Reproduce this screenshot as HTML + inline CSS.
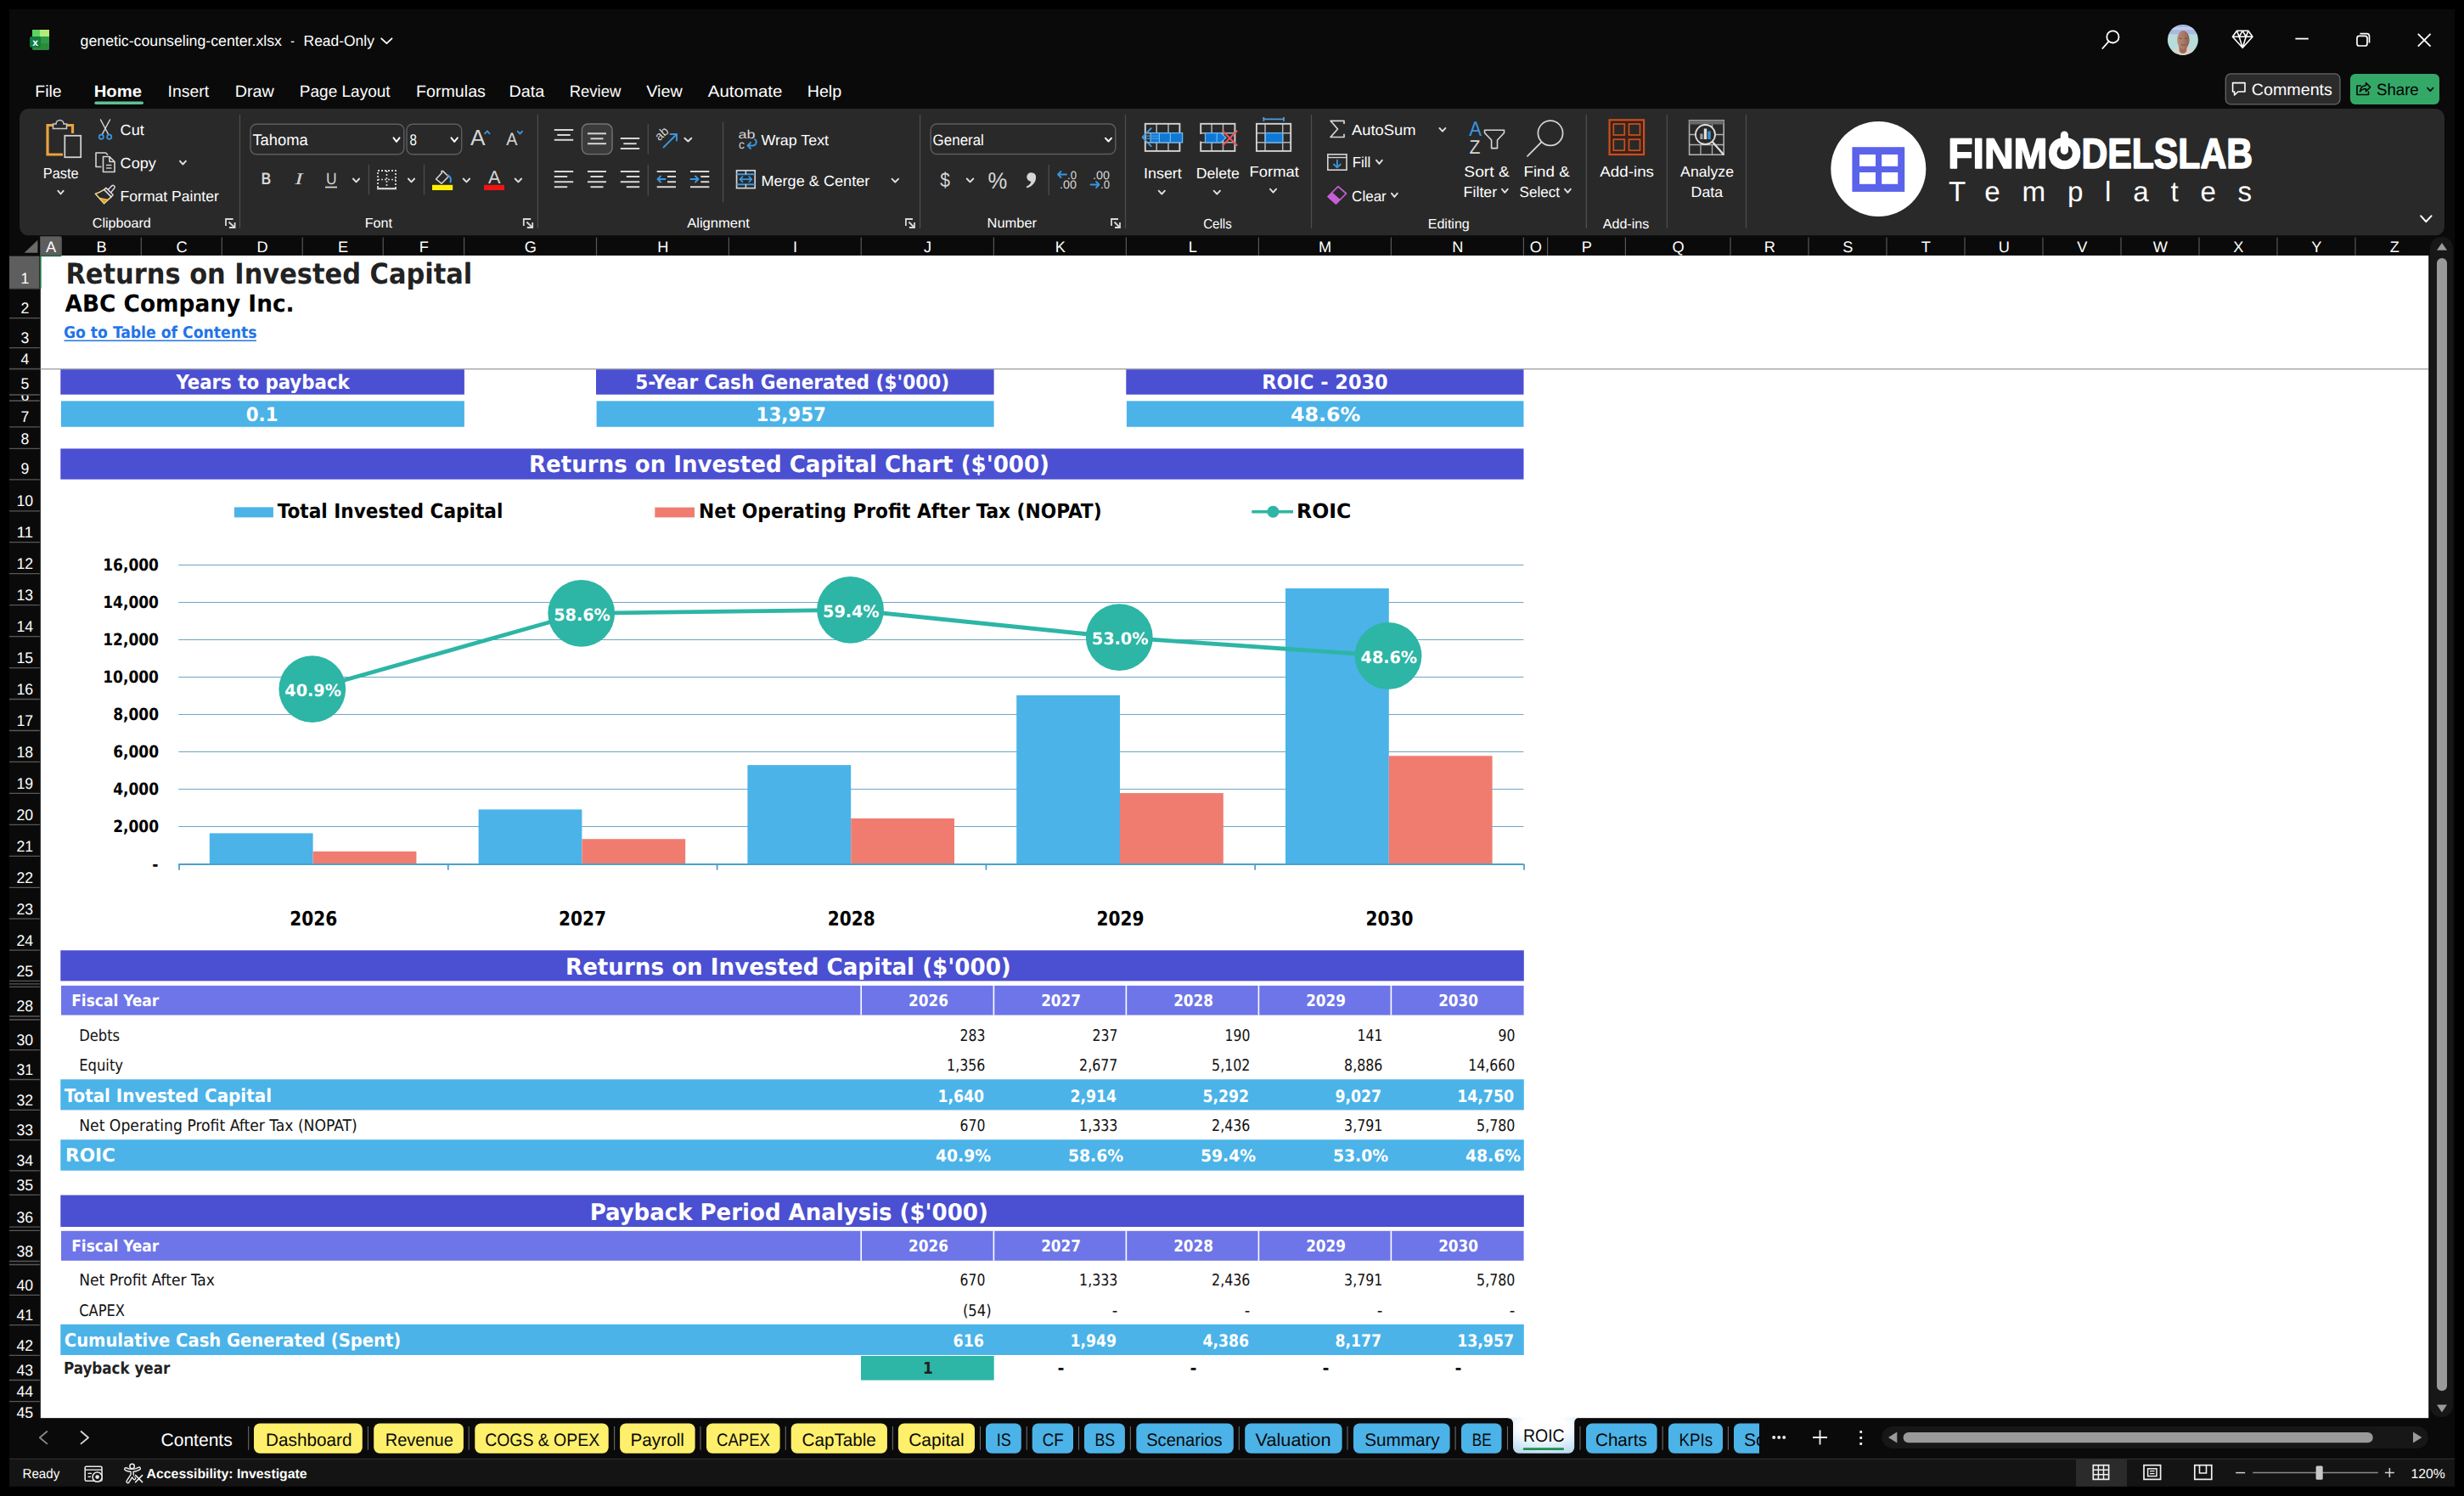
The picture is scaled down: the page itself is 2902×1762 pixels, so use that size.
<!DOCTYPE html>
<html lang="en"><head><meta charset="utf-8"><title>genetic-counseling-center.xlsx - Read-Only - Excel</title>
<style>
html,body{margin:0;padding:0;background:#000;overflow:hidden}
#app{position:relative;width:2902px;height:1762px;overflow:hidden;background:#000}
svg{display:block;position:absolute;left:0;top:0}
text{white-space:pre}
</style></head><body>
<div id="app">
<svg width="2902" height="1762" viewBox="0 0 2902 1762" text-rendering="geometricPrecision">
<rect x="0.0" y="0.0" width="2902.0" height="1762.0" fill="#000" />
<rect x="11.0" y="11.0" width="2880.0" height="1740.0" fill="#0a0a0a" />
<g>
<rect x="38.0" y="35.0" width="20.0" height="24.0" fill="#21a366" rx="2.5" />
<rect x="38.0" y="35.0" width="9.0" height="8.0" fill="#5ed363" />
<rect x="47.0" y="35.0" width="11.0" height="8.0" fill="#b3eb78" />
<path d="M38 43H58V56.5a2.5 2.5 0 0 1-2.5 2.5H40.5a2.5 2.5 0 0 1-2.5-2.5Z" fill="#2a8a3a"/>
<rect x="38.0" y="43.0" width="9.0" height="8.0" fill="#1f7a3c" />
<rect x="47.0" y="43.0" width="11.0" height="8.0" fill="#2f9a44" />
<rect x="35.0" y="43.0" width="13.0" height="13.0" fill="#107c41" rx="2" />
<text x="41.5" y="54" font-family="Liberation Sans, sans-serif" font-weight="bold" font-size="12" fill="#fff" text-anchor="middle">x</text>
</g>
<text x="94.6" y="53.5" font-family="Liberation Sans, sans-serif" font-size="17.6" font-weight="normal" fill="#fff" textLength="237.3" lengthAdjust="spacingAndGlyphs">genetic-counseling-center.xlsx</text>
<text x="342.2" y="53.5" font-family="Liberation Sans, sans-serif" font-size="17.6" font-weight="normal" fill="#fff" textLength="4.6" lengthAdjust="spacingAndGlyphs">-</text>
<text x="357.6" y="53.5" font-family="Liberation Sans, sans-serif" font-size="17.6" font-weight="normal" fill="#fff" textLength="83.3" lengthAdjust="spacingAndGlyphs">Read-Only</text>
<path d="M449.2 45.3 L455.4 51.2 L461.5 45.3" stroke="#fff" stroke-width="1.8" fill="none" stroke-linecap="round" stroke-linejoin="round"/>
<circle cx="2488.4" cy="43.4" r="7.1" fill="none" stroke="#fff" stroke-width="1.8"/>
<line x1="2483.5" y1="48.8" x2="2476.3" y2="57.0" stroke="#fff" stroke-width="1.8" stroke-linecap="round"/>
<defs><linearGradient id="fg" x1="0" y1="0" x2="1" y2="0"><stop offset="0" stop-color="#b88a76"/><stop offset="0.55" stop-color="#a67865"/><stop offset="1" stop-color="#8a5f50"/></linearGradient></defs>
<clipPath id="av"><circle cx="2570.9" cy="46.9" r="18"/></clipPath>
<g clip-path="url(#av)">
<rect x="2552.0" y="28.0" width="38.0" height="13.0" fill="#aab9e2" />
<rect x="2552.0" y="32.0" width="38.0" height="3.0" fill="#c2cdea" />
<rect x="2552.0" y="40.4" width="38.0" height="25.6" fill="#b8dcdb" />
<path d="M2556 66 C2558 58 2564 56.5 2567 56 L2575.5 56 C2579 56.5 2584 58 2586 66 Z" fill="#d9d2cd"/>
<path d="M2566.2 54 L2566.8 60 C2568 64 2574 64 2575.2 60 L2576 54 Z" fill="#9c6c5a"/>
<ellipse cx="2571.4" cy="47" rx="7.2" ry="11" fill="url(#fg)"/>
<path d="M2566.5 45.2 H2569.5 M2573 45.2 H2576" stroke="#6e4a3e" stroke-width="1" fill="none"/>
<path d="M2568.5 52.5 Q2571.4 54 2574.3 52.5" stroke="#7a4f44" stroke-width="0.9" fill="none"/>
</g>
<path d="M2634.5 36.3 H2647.9 L2653 43.2 L2641.2 56.3 L2629.4 43.2 Z M2629.4 43.2 H2653 M2634.5 36.3 L2637.2 43.2 L2641.2 56.3 L2645.2 43.2 L2647.9 36.3 M2637.2 43.2 L2641.2 36.3 L2645.2 43.2" stroke="#fff" stroke-width="1.6" fill="none" stroke-linejoin="round"/>
<line x1="2703.4" y1="45.6" x2="2718.8" y2="45.6" stroke="#fff" stroke-width="1.8"/>
<rect x="2776.0" y="42.3" width="12.0" height="11.7" fill="none" rx="2.5" stroke="#fff" stroke-width="1.7" />
<path d="M2779.5 39.6 H2787.5 a3 3 0 0 1 3 3 V50.5" stroke="#fff" stroke-width="1.7" fill="none" />
<path d="M2847.8 39.8 L2862.6 54.6 M2862.6 39.8 L2847.8 54.6" stroke="#fff" stroke-width="1.8" fill="none" />
<text x="41.3" y="113.8" font-family="Liberation Sans, sans-serif" font-size="19.2" font-weight="normal" fill="#fff" textLength="31.3" lengthAdjust="spacingAndGlyphs">File</text>
<text x="110.7" y="113.8" font-family="Liberation Sans, sans-serif" font-size="19.2" font-weight="bold" fill="#fff" textLength="56.3" lengthAdjust="spacingAndGlyphs">Home</text>
<text x="197.6" y="113.8" font-family="Liberation Sans, sans-serif" font-size="19.2" font-weight="normal" fill="#fff" textLength="48.5" lengthAdjust="spacingAndGlyphs">Insert</text>
<text x="276.7" y="113.8" font-family="Liberation Sans, sans-serif" font-size="19.2" font-weight="normal" fill="#fff" textLength="46.2" lengthAdjust="spacingAndGlyphs">Draw</text>
<text x="352.8" y="113.8" font-family="Liberation Sans, sans-serif" font-size="19.2" font-weight="normal" fill="#fff" textLength="106.8" lengthAdjust="spacingAndGlyphs">Page Layout</text>
<text x="490.0" y="113.8" font-family="Liberation Sans, sans-serif" font-size="19.2" font-weight="normal" fill="#fff" textLength="81.9" lengthAdjust="spacingAndGlyphs">Formulas</text>
<text x="599.6" y="113.8" font-family="Liberation Sans, sans-serif" font-size="19.2" font-weight="normal" fill="#fff" textLength="41.7" lengthAdjust="spacingAndGlyphs">Data</text>
<text x="670.7" y="113.8" font-family="Liberation Sans, sans-serif" font-size="19.2" font-weight="normal" fill="#fff" textLength="60.7" lengthAdjust="spacingAndGlyphs">Review</text>
<text x="761.2" y="113.8" font-family="Liberation Sans, sans-serif" font-size="19.2" font-weight="normal" fill="#fff" textLength="42.5" lengthAdjust="spacingAndGlyphs">View</text>
<text x="833.8" y="113.8" font-family="Liberation Sans, sans-serif" font-size="19.2" font-weight="normal" fill="#fff" textLength="87.6" lengthAdjust="spacingAndGlyphs">Automate</text>
<text x="950.7" y="113.8" font-family="Liberation Sans, sans-serif" font-size="19.2" font-weight="normal" fill="#fff" textLength="40.5" lengthAdjust="spacingAndGlyphs">Help</text>
<rect x="111.3" y="119.4" width="57.7" height="3.5" fill="#5fc191" rx="1.7" />
<rect x="2621.3" y="86.9" width="134.7" height="36.0" fill="#2b2b2b" rx="6" stroke="#666" stroke-width="1.3" />
<path d="M2629.6 97.6 H2644 V108 H2636 L2631.6 112 V108 H2629.6 Z" stroke="#fff" stroke-width="1.6" fill="none" stroke-linejoin="round"/>
<text x="2651.8" y="112.2" font-family="Liberation Sans, sans-serif" font-size="19.2" font-weight="normal" fill="#fff" textLength="95.1" lengthAdjust="spacingAndGlyphs">Comments</text>
<rect x="2768.0" y="86.9" width="105.0" height="36.0" fill="#34a867" rx="6" />
<path d="M2781 101 H2776 V111.5 H2789.5 V107.5" stroke="#0a0a0a" stroke-width="1.6" fill="none" stroke-linejoin="round"/>
<path d="M2779.5 108 C2780 102.5 2783 100.8 2786.5 100.8 V97.6 L2791.6 102.6 L2786.5 107.6 V104.4 C2783.5 104.4 2781.5 105 2779.5 108 Z" stroke="#0a0a0a" stroke-width="1.5" fill="none" stroke-linejoin="round"/>
<text x="2799.0" y="112.2" font-family="Liberation Sans, sans-serif" font-size="19.2" font-weight="normal" fill="#000" textLength="49.7" lengthAdjust="spacingAndGlyphs">Share</text>
<path d="M2858.9 103.5 L2862.3 107.1 L2865.7 103.5" stroke="#000" stroke-width="1.6" fill="none" stroke-linecap="round" stroke-linejoin="round"/>
<rect x="23.0" y="128.0" width="2856.0" height="149.5" fill="#292929" rx="11" />
<line x1="282.5" y1="135.0" x2="282.5" y2="269.0" stroke="#4d4d4d" stroke-width="1.3"/>
<line x1="633.4" y1="135.0" x2="633.4" y2="269.0" stroke="#4d4d4d" stroke-width="1.3"/>
<line x1="1083.6" y1="135.0" x2="1083.6" y2="269.0" stroke="#4d4d4d" stroke-width="1.3"/>
<line x1="1325.5" y1="135.0" x2="1325.5" y2="269.0" stroke="#4d4d4d" stroke-width="1.3"/>
<line x1="1544.5" y1="135.0" x2="1544.5" y2="269.0" stroke="#4d4d4d" stroke-width="1.3"/>
<line x1="1868.3" y1="135.0" x2="1868.3" y2="269.0" stroke="#4d4d4d" stroke-width="1.3"/>
<line x1="1963.4" y1="135.0" x2="1963.4" y2="269.0" stroke="#4d4d4d" stroke-width="1.3"/>
<line x1="2056.5" y1="135.0" x2="2056.5" y2="269.0" stroke="#4d4d4d" stroke-width="1.3"/>
<path d="M63 147.5 H56 V182 H74" stroke="#e8a33d" stroke-width="3.2" fill="none" stroke-linejoin="miter"/>
<path d="M78 147.5 H85.5 V157" stroke="#e8a33d" stroke-width="3.2" fill="none" />
<path d="M62.5 151.5 V146 H66 a4.5 4.5 0 0 1 9 0 H78.5 V151.5 Z" stroke="#c8c8c8" stroke-width="1.6" fill="#292929" />
<rect x="76.3" y="159.8" width="18.9" height="25.4" fill="#292929" stroke="#d0d0d0" stroke-width="1.8" />
<text x="50.8" y="209.6" font-family="Liberation Sans, sans-serif" font-size="17.4" font-weight="normal" fill="#fff" textLength="41.8" lengthAdjust="spacingAndGlyphs">Paste</text>
<path d="M68.3 224.7 L71.5 228.5 L74.7 224.7" stroke="#e0e0e0" stroke-width="1.9" fill="none" stroke-linecap="round" stroke-linejoin="round"/>
<path d="M118.5 141 L127.5 158 M129.5 141 L120.5 158" stroke="#d6d6d6" stroke-width="1.5" fill="none" stroke-linecap="round"/>
<circle cx="119.3" cy="161.3" r="2.6" fill="none" stroke="#3a96dd" stroke-width="1.7"/>
<circle cx="128.7" cy="161.3" r="2.6" fill="none" stroke="#3a96dd" stroke-width="1.7"/>
<text x="141.6" y="158.5" font-family="Liberation Sans, sans-serif" font-size="17.4" font-weight="normal" fill="#fff" textLength="28.2" lengthAdjust="spacingAndGlyphs">Cut</text>
<path d="M119.5 196.5 H113 V180 H124.5 L127 182.5" stroke="#d6d6d6" stroke-width="1.6" fill="none" stroke-linejoin="round"/>
<path d="M121.5 184.5 H129 L135 190.5 V202.5 H121.5 Z M129 184.5 V190.5 H135" stroke="#d6d6d6" stroke-width="1.6" fill="none" stroke-linejoin="round"/>
<line x1="125.0" y1="194.5" x2="131.5" y2="194.5" stroke="#d6d6d6" stroke-width="1.4"/>
<line x1="125.0" y1="198.0" x2="131.5" y2="198.0" stroke="#d6d6d6" stroke-width="1.4"/>
<text x="141.6" y="197.5" font-family="Liberation Sans, sans-serif" font-size="17.4" font-weight="normal" fill="#fff" textLength="42.2" lengthAdjust="spacingAndGlyphs">Copy</text>
<path d="M211.9 189.7 L215.4 193.5 L218.9 189.7" stroke="#e0e0e0" stroke-width="1.9" fill="none" stroke-linecap="round" stroke-linejoin="round"/>
<path d="M122.6 223.4 Q117.5 226.6 112.4 228.3 L122.6 239.8 L131 231.9" stroke="#f3dc90" stroke-width="1.5" fill="none" stroke-linejoin="round" stroke-linecap="round"/>
<path d="M117.2 233.2 L127.6 235.2 L122.6 239.8 Z" stroke="#f3dc90" stroke-width="0.8" fill="#e9a227" stroke-linejoin="round"/>
<path d="M122.6 223.4 L124.9 221.4 L133.2 229.5 L131 231.9 Z" stroke="#dedae8" stroke-width="1.5" fill="none" stroke-linejoin="round"/>
<path d="M127.2 223.5 L131.6 218.9 a2.1 2.1 0 0 1 3.3 2.5 L130.6 226.8" stroke="#dedae8" stroke-width="1.5" fill="none" stroke-linejoin="round" stroke-linecap="round"/>
<text x="141.6" y="236.5" font-family="Liberation Sans, sans-serif" font-size="17.4" font-weight="normal" fill="#fff" textLength="116.2" lengthAdjust="spacingAndGlyphs">Format Painter</text>
<text x="108.8" y="267.6" font-family="Liberation Sans, sans-serif" font-size="16" font-weight="normal" fill="#fff" textLength="69.0" lengthAdjust="spacingAndGlyphs">Clipboard</text>
<path d="M266.0 266.0 V258.0 H274.6" stroke="#d8d8d8" stroke-width="1.8" fill="none" />
<path d="M269.5 261.5 L276.6 268.0 M276.6 262.0 V268.0 H270.0" stroke="#d8d8d8" stroke-width="1.8" fill="none" />
<rect x="295.0" y="146.2" width="180.8" height="35.5" fill="none" rx="7" stroke="#5e5e5e" stroke-width="1.4" />
<rect x="479.0" y="146.2" width="64.7" height="35.5" fill="none" rx="7" stroke="#5e5e5e" stroke-width="1.4" />
<text x="297.4" y="171.0" font-family="Liberation Sans, sans-serif" font-size="18.4" font-weight="normal" fill="#fff" textLength="65.3" lengthAdjust="spacingAndGlyphs">Tahoma</text>
<path d="M463.5 162.3 L467.0 166.9 L470.5 162.3" stroke="#fff" stroke-width="1.9" fill="none" stroke-linecap="round" stroke-linejoin="round"/>
<text x="482.6" y="171.0" font-family="Liberation Sans, sans-serif" font-size="18.4" font-weight="normal" fill="#fff" textLength="8.4" lengthAdjust="spacingAndGlyphs">8</text>
<path d="M531.5 162.3 L535.2 166.9 L538.9 162.3" stroke="#fff" stroke-width="1.9" fill="none" stroke-linecap="round" stroke-linejoin="round"/>
<text x="554.0" y="171.4" font-family="Liberation Sans, sans-serif" font-size="26" font-weight="normal" fill="#d6d6d6" textLength="17.5" lengthAdjust="spacingAndGlyphs">A</text>
<path d="M571.1 157.3 L573.8 154.3 L576.5 157.3" stroke="#3a96dd" stroke-width="1.8" fill="none" stroke-linecap="round" stroke-linejoin="round"/>
<text x="596.3" y="171.4" font-family="Liberation Sans, sans-serif" font-size="21" font-weight="normal" fill="#d6d6d6" textLength="13.2" lengthAdjust="spacingAndGlyphs">A</text>
<path d="M609.7 154.7 L612.4 157.7 L615.1 154.7" stroke="#3a96dd" stroke-width="1.8" fill="none" stroke-linecap="round" stroke-linejoin="round"/>
<text x="307.8" y="217.3" font-family="Liberation Sans, sans-serif" font-size="19.6" font-weight="bold" fill="#d6d6d6" textLength="11.4" lengthAdjust="spacingAndGlyphs">B</text>
<text x="347.2" y="217.3" font-family="Liberation Serif, serif" font-size="19.6" font-weight="normal" fill="#d6d6d6" font-style="italic" textLength="9.5" lengthAdjust="spacingAndGlyphs">I</text>
<text x="384.0" y="217.2" font-family="Liberation Sans, sans-serif" font-size="19.4" font-weight="normal" fill="#d6d6d6" textLength="12.6" lengthAdjust="spacingAndGlyphs">U</text>
<line x1="383.0" y1="220.5" x2="397.0" y2="220.5" stroke="#d6d6d6" stroke-width="1.8"/>
<path d="M415.9 210.5 L419.5 214.3 L423.1 210.5" stroke="#e0e0e0" stroke-width="1.9" fill="none" stroke-linecap="round" stroke-linejoin="round"/>
<line x1="434.4" y1="193.7" x2="434.4" y2="229.5" stroke="#4d4d4d" stroke-width="1.3"/>
<rect x="445" y="201" width="21" height="21" fill="none" stroke="#d6d6d6" stroke-width="1.8" stroke-dasharray="2 2"/>
<path d="M455.5 201 V222 M445 211.5 H466" stroke="#d6d6d6" stroke-width="1.6" stroke-dasharray="2 2" fill="none"/>
<line x1="444.0" y1="222.2" x2="467.0" y2="222.2" stroke="#d6d6d6" stroke-width="2.2"/>
<path d="M480.9 210.5 L484.5 214.3 L488.1 210.5" stroke="#e0e0e0" stroke-width="1.9" fill="none" stroke-linecap="round" stroke-linejoin="round"/>
<line x1="499.5" y1="193.7" x2="499.5" y2="229.5" stroke="#4d4d4d" stroke-width="1.3"/>
<path d="M520.5 203.5 L513.5 211 L520 216.2 L528.2 208 L521.8 201.6 C520.6 200.4 519 202 520.5 203.5 Z" stroke="#d6d6d6" stroke-width="1.6" fill="none" stroke-linejoin="round"/>
<path d="M527.5 206.5 C530.5 207.5 531.5 211 530.5 214.5" stroke="#3a96dd" stroke-width="2.2" fill="none" stroke-linecap="round"/>
<rect x="509.0" y="217.8" width="24.2" height="6.2" fill="#fff100" />
<path d="M545.7 210.5 L549.4 214.3 L553.1 210.5" stroke="#e0e0e0" stroke-width="1.9" fill="none" stroke-linecap="round" stroke-linejoin="round"/>
<text x="575.0" y="216.3" font-family="Liberation Sans, sans-serif" font-size="21.6" font-weight="normal" fill="#d6d6d6" textLength="14.5" lengthAdjust="spacingAndGlyphs">A</text>
<rect x="570.0" y="217.8" width="24.0" height="6.2" fill="#f01414" />
<path d="M606.7 210.5 L610.4 214.3 L614.1 210.5" stroke="#e0e0e0" stroke-width="1.9" fill="none" stroke-linecap="round" stroke-linejoin="round"/>
<text x="429.7" y="267.5" font-family="Liberation Sans, sans-serif" font-size="16" font-weight="normal" fill="#fff" textLength="32.3" lengthAdjust="spacingAndGlyphs">Font</text>
<path d="M616.8 266.0 V258.0 H625.2" stroke="#d8d8d8" stroke-width="1.8" fill="none" />
<path d="M620.3 261.5 L627.2 268.0 M627.2 262.0 V268.0 H620.8" stroke="#d8d8d8" stroke-width="1.8" fill="none" />
<line x1="652.8" y1="153.0" x2="675.2" y2="153.0" stroke="#d6d6d6" stroke-width="2"/>
<line x1="656.3" y1="159.0" x2="671.7" y2="159.0" stroke="#d6d6d6" stroke-width="2"/>
<line x1="652.8" y1="164.8" x2="675.2" y2="164.8" stroke="#d6d6d6" stroke-width="2"/>
<rect x="685.4" y="146.0" width="35.6" height="35.6" fill="#3b3b3b" rx="7" stroke="#757575" stroke-width="1.4" />
<line x1="692.0" y1="157.3" x2="714.0" y2="157.3" stroke="#d6d6d6" stroke-width="2"/>
<line x1="695.5" y1="163.3" x2="710.5" y2="163.3" stroke="#d6d6d6" stroke-width="2"/>
<line x1="692.0" y1="169.2" x2="714.0" y2="169.2" stroke="#d6d6d6" stroke-width="2"/>
<line x1="730.8" y1="163.0" x2="753.2" y2="163.0" stroke="#d6d6d6" stroke-width="2"/>
<line x1="734.3" y1="169.2" x2="749.7" y2="169.2" stroke="#d6d6d6" stroke-width="2"/>
<line x1="730.8" y1="175.0" x2="753.2" y2="175.0" stroke="#d6d6d6" stroke-width="2"/>
<line x1="763.3" y1="146.0" x2="763.3" y2="181.6" stroke="#4d4d4d" stroke-width="1.3"/>
<line x1="763.3" y1="194.0" x2="763.3" y2="230.5" stroke="#4d4d4d" stroke-width="1.3"/>
<text x="0" y="0" font-family="Liberation Sans, sans-serif" font-size="14.5" fill="#d6d6d6" transform="translate(776.5,166.5) rotate(-42)">ab</text>
<path d="M781.5 173.5 L796.5 158.5 M789.5 158 H797 V165.5" stroke="#3a96dd" stroke-width="1.9" fill="none" stroke-linecap="round" stroke-linejoin="round"/>
<path d="M806.4 162.7 L810.4 166.5 L814.3 162.7" stroke="#e0e0e0" stroke-width="1.9" fill="none" stroke-linecap="round" stroke-linejoin="round"/>
<line x1="652.8" y1="202.0" x2="675.2" y2="202.0" stroke="#d6d6d6" stroke-width="2"/>
<line x1="652.8" y1="208.0" x2="668.2" y2="208.0" stroke="#d6d6d6" stroke-width="2"/>
<line x1="652.8" y1="214.2" x2="675.2" y2="214.2" stroke="#d6d6d6" stroke-width="2"/>
<line x1="652.8" y1="220.2" x2="668.2" y2="220.2" stroke="#d6d6d6" stroke-width="2"/>
<line x1="692.0" y1="202.0" x2="714.0" y2="202.0" stroke="#d6d6d6" stroke-width="2"/>
<line x1="695.5" y1="208.0" x2="710.5" y2="208.0" stroke="#d6d6d6" stroke-width="2"/>
<line x1="692.0" y1="214.2" x2="714.0" y2="214.2" stroke="#d6d6d6" stroke-width="2"/>
<line x1="695.5" y1="220.2" x2="710.5" y2="220.2" stroke="#d6d6d6" stroke-width="2"/>
<line x1="730.8" y1="202.0" x2="753.2" y2="202.0" stroke="#d6d6d6" stroke-width="2"/>
<line x1="737.8" y1="208.0" x2="753.2" y2="208.0" stroke="#d6d6d6" stroke-width="2"/>
<line x1="730.8" y1="214.2" x2="753.2" y2="214.2" stroke="#d6d6d6" stroke-width="2"/>
<line x1="737.8" y1="220.2" x2="753.2" y2="220.2" stroke="#d6d6d6" stroke-width="2"/>
<line x1="773.7" y1="202.0" x2="796.0" y2="202.0" stroke="#d6d6d6" stroke-width="2"/>
<line x1="773.7" y1="220.2" x2="796.0" y2="220.2" stroke="#d6d6d6" stroke-width="2"/>
<line x1="786.0" y1="208.0" x2="796.0" y2="208.0" stroke="#d6d6d6" stroke-width="2"/>
<line x1="786.0" y1="214.2" x2="796.0" y2="214.2" stroke="#d6d6d6" stroke-width="2"/>
<path d="M783.5 211 H774.5 M778 207.5 L774.5 211 L778 214.5" stroke="#3a96dd" stroke-width="1.9" fill="none" stroke-linecap="round" stroke-linejoin="round"/>
<line x1="813.0" y1="202.0" x2="835.3" y2="202.0" stroke="#d6d6d6" stroke-width="2"/>
<line x1="813.0" y1="220.2" x2="835.3" y2="220.2" stroke="#d6d6d6" stroke-width="2"/>
<line x1="825.3" y1="208.0" x2="835.3" y2="208.0" stroke="#d6d6d6" stroke-width="2"/>
<line x1="825.3" y1="214.2" x2="835.3" y2="214.2" stroke="#d6d6d6" stroke-width="2"/>
<path d="M813.5 211 H822.5 M819 207.5 L822.5 211 L819 214.5" stroke="#3a96dd" stroke-width="1.9" fill="none" stroke-linecap="round" stroke-linejoin="round"/>
<line x1="851.6" y1="143.7" x2="851.6" y2="238.0" stroke="#4d4d4d" stroke-width="1.3"/>
<text x="869.5" y="163" font-family="Liberation Sans, sans-serif" font-size="14" fill="#d6d6d6" textLength="20" lengthAdjust="spacingAndGlyphs">ab</text>
<text x="870" y="174.5" font-family="Liberation Sans, sans-serif" font-size="14" fill="#d6d6d6">c</text>
<path d="M889 164 C892 166 891 171.5 886.5 171.5 H880.5 M884 168 L880.5 171.5 L884 175" stroke="#3a96dd" stroke-width="1.9" fill="none" stroke-linecap="round" stroke-linejoin="round"/>
<text x="896.4" y="170.7" font-family="Liberation Sans, sans-serif" font-size="17.4" font-weight="normal" fill="#fff" textLength="79.7" lengthAdjust="spacingAndGlyphs">Wrap Text</text>
<rect x="867.6" y="200.8" width="21.6" height="20.8" fill="none" stroke="#d6d6d6" stroke-width="1.7" />
<path d="M867.6 205.2 H889.2 M867.6 217.2 H889.2" stroke="#3a96dd" stroke-width="1.9" fill="none" />
<path d="M878.4 200.8 V205.2 M878.4 217.2 V221.6" stroke="#d6d6d6" stroke-width="1.5" fill="none" />
<path d="M871.5 211.2 H885.3 M874.5 208.2 L871.5 211.2 L874.5 214.2 M882.3 208.2 L885.3 211.2 L882.3 214.2" stroke="#3a96dd" stroke-width="1.8" fill="none" stroke-linecap="round" stroke-linejoin="round"/>
<text x="896.4" y="218.7" font-family="Liberation Sans, sans-serif" font-size="17.4" font-weight="normal" fill="#fff" textLength="127.9" lengthAdjust="spacingAndGlyphs">Merge &amp; Center</text>
<path d="M1050.5 210.7 L1054.3 214.5 L1058.1 210.7" stroke="#e0e0e0" stroke-width="1.9" fill="none" stroke-linecap="round" stroke-linejoin="round"/>
<text x="809.2" y="267.8" font-family="Liberation Sans, sans-serif" font-size="16" font-weight="normal" fill="#fff" textLength="73.6" lengthAdjust="spacingAndGlyphs">Alignment</text>
<path d="M1066.9 266.0 V258.0 H1075.0" stroke="#d8d8d8" stroke-width="1.8" fill="none" />
<path d="M1070.4 261.5 L1077.0 268.0 M1077.0 262.0 V268.0 H1070.9" stroke="#d8d8d8" stroke-width="1.8" fill="none" />
<rect x="1096.2" y="146.0" width="217.6" height="35.5" fill="none" rx="7" stroke="#5e5e5e" stroke-width="1.4" />
<text x="1098.6" y="170.8" font-family="Liberation Sans, sans-serif" font-size="18" font-weight="normal" fill="#fff" textLength="60.3" lengthAdjust="spacingAndGlyphs">General</text>
<path d="M1301.9 162.7 L1305.5 166.5 L1309.1 162.7" stroke="#fff" stroke-width="1.9" fill="none" stroke-linecap="round" stroke-linejoin="round"/>
<text x="1107.3" y="219.5" font-family="Liberation Sans, sans-serif" font-size="24" font-weight="normal" fill="#d6d6d6" textLength="11.7" lengthAdjust="spacingAndGlyphs">$</text>
<path d="M1138.8 210.5 L1142.5 214.3 L1146.3 210.5" stroke="#e0e0e0" stroke-width="1.9" fill="none" stroke-linecap="round" stroke-linejoin="round"/>
<text x="1163.4" y="222.0" font-family="Liberation Sans, sans-serif" font-size="27" font-weight="normal" fill="#d6d6d6" textLength="22.8" lengthAdjust="spacingAndGlyphs">%</text>
<path d="M1214.8 203.2 a5.3 5.3 0 0 1 5.3 5.6 c0 6 -4 10.6 -10.6 12.6 l-0.8 -1.6 c3.6 -1.6 5.4 -3.6 5.6 -6 a5.3 5.3 0 0 1 0.5 -10.6 Z" stroke="none" stroke-width="0" fill="#d6d6d6" />
<line x1="1235.3" y1="194.0" x2="1235.3" y2="230.0" stroke="#4d4d4d" stroke-width="1.3"/>
<path d="M1256 205.5 H1246 M1249.5 202 L1246 205.5 L1249.5 209" stroke="#3a96dd" stroke-width="1.8" fill="none" stroke-linecap="round" stroke-linejoin="round"/>
<text x="1257" y="210.5" font-family="Liberation Sans, sans-serif" font-size="13.5" fill="#d6d6d6" textLength="11" lengthAdjust="spacingAndGlyphs">.0</text>
<text x="1248" y="222.3" font-family="Liberation Sans, sans-serif" font-size="13.5" fill="#d6d6d6" textLength="20" lengthAdjust="spacingAndGlyphs">.00</text>
<text x="1287" y="210.5" font-family="Liberation Sans, sans-serif" font-size="13.5" fill="#d6d6d6" textLength="20" lengthAdjust="spacingAndGlyphs">.00</text>
<text x="1296" y="222.3" font-family="Liberation Sans, sans-serif" font-size="13.5" fill="#d6d6d6" textLength="11" lengthAdjust="spacingAndGlyphs">.0</text>
<path d="M1284.5 217.5 H1294.5 M1291 214 L1294.5 217.5 L1291 221" stroke="#3a96dd" stroke-width="1.8" fill="none" stroke-linecap="round" stroke-linejoin="round"/>
<text x="1162.6" y="268.2" font-family="Liberation Sans, sans-serif" font-size="16" font-weight="normal" fill="#fff" textLength="58.5" lengthAdjust="spacingAndGlyphs">Number</text>
<path d="M1309.0 266.0 V258.0 H1317.0" stroke="#d8d8d8" stroke-width="1.8" fill="none" />
<path d="M1312.5 261.5 L1319.0 268.0 M1319.0 262.0 V268.0 H1313.0" stroke="#d8d8d8" stroke-width="1.8" fill="none" />
<path d="M1362.2 145.8 V177.9 M1376 145.8 V177.9 M1348.8 156.8 H1389.4 M1348.8 167.7 H1389.4" stroke="#b4b4b4" stroke-width="1.5" fill="none" />
<rect x="1348.8" y="145.8" width="40.6" height="32.1" fill="none" stroke="#d4d4d4" stroke-width="1.9" />
<rect x="1355.0" y="156.6" width="37.6" height="11.2" fill="#0f78d4" stroke="#6cb8f0" stroke-width="1.3" />
<path d="M1365.4 156.6 V167.8 M1378.4 156.6 V167.8" stroke="#6cb8f0" stroke-width="1.2" fill="none" />
<path d="M1365 160.2 H1348 M1365 163.2 H1348" stroke="#4a9ee0" stroke-width="1.3" fill="none" />
<path d="M1355.7 151.2 L1345.6 161.7 L1355.7 172.2" stroke="#4a9ee0" stroke-width="1.9" fill="none" stroke-linecap="round" stroke-linejoin="round"/>
<text x="1347.0" y="209.7" font-family="Liberation Sans, sans-serif" font-size="17.4" font-weight="normal" fill="#fff" textLength="44.8" lengthAdjust="spacingAndGlyphs">Insert</text>
<path d="M1364.7 224.7 L1368.3 228.5 L1371.9 224.7" stroke="#e0e0e0" stroke-width="1.9" fill="none" stroke-linecap="round" stroke-linejoin="round"/>
<path d="M1427.1 145.8 V177.9 M1440.5 145.8 V177.9 M1414.2 156.8 H1454.4 M1414.2 167.7 H1454.4" stroke="#b4b4b4" stroke-width="1.5" fill="none" />
<rect x="1414.2" y="145.8" width="40.2" height="32.1" fill="none" stroke="#d4d4d4" stroke-width="1.9" />
<rect x="1411.0" y="158.0" width="5.0" height="8.5" fill="#292929" />
<path d="M1419.5 156.6 H1438 L1444 162.2 L1438 167.8 H1419.5 Z" stroke="#6cb8f0" stroke-width="1.3" fill="#0f78d4" stroke-linejoin="round"/>
<path d="M1433.2 156.6 V167.8" stroke="#6cb8f0" stroke-width="1.2" fill="none" />
<path d="M1440.2 154.4 L1456.6 171 M1456.6 154.4 L1440.2 171" stroke="#e8575c" stroke-width="2.1" fill="none" stroke-linecap="round"/>
<text x="1408.7" y="209.7" font-family="Liberation Sans, sans-serif" font-size="17.4" font-weight="normal" fill="#fff" textLength="51.1" lengthAdjust="spacingAndGlyphs">Delete</text>
<path d="M1429.6 224.7 L1433.3 228.5 L1437.0 224.7" stroke="#e0e0e0" stroke-width="1.9" fill="none" stroke-linecap="round" stroke-linejoin="round"/>
<path d="M1490 145.8 V177.9 M1510.7 145.8 V177.9 M1479.9 156.8 H1520.2 M1479.9 167.7 H1520.2" stroke="#b4b4b4" stroke-width="1.5" fill="none" />
<rect x="1479.9" y="145.8" width="40.3" height="32.1" fill="none" stroke="#d4d4d4" stroke-width="1.9" />
<rect x="1490.4" y="156.6" width="20.2" height="11.3" fill="#0f78d4" stroke="#6cb8f0" stroke-width="1.3" />
<path d="M1488.3 140.4 H1512 M1488.3 138.1 V142.8 M1512 138.1 V142.8" stroke="#4a9ee0" stroke-width="1.9" fill="none" />
<text x="1471.6" y="207.8" font-family="Liberation Sans, sans-serif" font-size="17.4" font-weight="normal" fill="#fff" textLength="58.2" lengthAdjust="spacingAndGlyphs">Format</text>
<path d="M1495.9 222.7 L1499.5 226.7 L1503.1 222.7" stroke="#e0e0e0" stroke-width="1.9" fill="none" stroke-linecap="round" stroke-linejoin="round"/>
<text x="1417.2" y="269.0" font-family="Liberation Sans, sans-serif" font-size="16" font-weight="normal" fill="#fff" textLength="33.6" lengthAdjust="spacingAndGlyphs">Cells</text>
<path d="M1583 146 V142.3 H1567 L1575.5 152 L1567 161.5 H1583 V157.8" stroke="#d6d6d6" stroke-width="1.7" fill="none" stroke-linejoin="round"/>
<text x="1592.1" y="159.0" font-family="Liberation Sans, sans-serif" font-size="17.4" font-weight="normal" fill="#fff" textLength="75.4" lengthAdjust="spacingAndGlyphs">AutoSum</text>
<path d="M1695.4 150.9 L1698.9 154.7 L1702.4 150.9" stroke="#e0e0e0" stroke-width="1.9" fill="none" stroke-linecap="round" stroke-linejoin="round"/>
<rect x="1563.8" y="181.8" width="22.2" height="18.4" fill="none" stroke="#d6d6d6" stroke-width="1.6" />
<line x1="1563.8" y1="185.5" x2="1586.0" y2="185.5" stroke="#d6d6d6" stroke-width="1.4"/>
<path d="M1574.9 188.5 V197 M1571 193.5 L1574.9 197.3 L1578.8 193.5" stroke="#3a96dd" stroke-width="1.8" fill="none" stroke-linecap="round" stroke-linejoin="round"/>
<text x="1592.8" y="197.3" font-family="Liberation Sans, sans-serif" font-size="17.4" font-weight="normal" fill="#fff" textLength="21.4" lengthAdjust="spacingAndGlyphs">Fill</text>
<path d="M1620.9 188.7 L1624.4 192.9 L1627.9 188.7" stroke="#e0e0e0" stroke-width="1.9" fill="none" stroke-linecap="round" stroke-linejoin="round"/>
<path d="M1576 219.6 L1585.5 228 L1573.5 240 L1564 231.5 Z" stroke="#c65fd6" stroke-width="1.7" fill="none" stroke-linejoin="round"/>
<path d="M1569 226.5 L1578.5 235 L1573.5 240 L1564 231.5 Z" stroke="none" stroke-width="0" fill="#c65fd6" />
<text x="1592.1" y="236.8" font-family="Liberation Sans, sans-serif" font-size="17.4" font-weight="normal" fill="#fff" textLength="40.7" lengthAdjust="spacingAndGlyphs">Clear</text>
<path d="M1638.9 227.7 L1642.3 231.9 L1645.8 227.7" stroke="#e0e0e0" stroke-width="1.9" fill="none" stroke-linecap="round" stroke-linejoin="round"/>
<text x="1730.2" y="160.0" font-family="Liberation Sans, sans-serif" font-size="24.4" font-weight="normal" fill="#3a96dd" textLength="14.8" lengthAdjust="spacingAndGlyphs">A</text>
<text x="1730.4" y="181.0" font-family="Liberation Sans, sans-serif" font-size="23" font-weight="normal" fill="#d6d6d6" textLength="13.0" lengthAdjust="spacingAndGlyphs">Z</text>
<path d="M1748.6 153.2 H1771.5 V156.5 L1763.5 165 V174.6 H1756.6 V165 L1748.6 156.5 Z" stroke="#d6d6d6" stroke-width="1.6" fill="none" stroke-linejoin="round"/>
<text x="1724.3" y="207.8" font-family="Liberation Sans, sans-serif" font-size="17.4" font-weight="normal" fill="#fff" textLength="53.5" lengthAdjust="spacingAndGlyphs">Sort &amp;</text>
<text x="1723.6" y="231.7" font-family="Liberation Sans, sans-serif" font-size="17.4" font-weight="normal" fill="#fff" textLength="39.6" lengthAdjust="spacingAndGlyphs">Filter</text>
<path d="M1768.9 222.7 L1772.3 226.8 L1775.8 222.7" stroke="#e0e0e0" stroke-width="1.9" fill="none" stroke-linecap="round" stroke-linejoin="round"/>
<circle cx="1826.0" cy="156.8" r="14.6" fill="none" stroke="#d6d6d6" stroke-width="1.7"/>
<line x1="1815.4" y1="167.4" x2="1799.0" y2="183.8" stroke="#d6d6d6" stroke-width="1.8" stroke-linecap="round"/>
<text x="1794.4" y="207.8" font-family="Liberation Sans, sans-serif" font-size="17.4" font-weight="normal" fill="#fff" textLength="54.4" lengthAdjust="spacingAndGlyphs">Find &amp;</text>
<text x="1789.6" y="231.7" font-family="Liberation Sans, sans-serif" font-size="17.4" font-weight="normal" fill="#fff" textLength="47.5" lengthAdjust="spacingAndGlyphs">Select</text>
<path d="M1842.9 222.7 L1846.4 226.8 L1849.9 222.7" stroke="#e0e0e0" stroke-width="1.9" fill="none" stroke-linecap="round" stroke-linejoin="round"/>
<text x="1681.7" y="268.5" font-family="Liberation Sans, sans-serif" font-size="16" font-weight="normal" fill="#fff" textLength="49.1" lengthAdjust="spacingAndGlyphs">Editing</text>
<rect x="1895.6" y="141.3" width="40.5" height="40.7" fill="#3a2018" stroke="#c8511f" stroke-width="2.2" />
<rect x="1900.3" y="146.0" width="13.0" height="13.0" fill="#292929" stroke="#c8511f" stroke-width="1.7" />
<rect x="1918.5" y="146.0" width="13.0" height="13.0" fill="#292929" stroke="#c8511f" stroke-width="1.7" />
<rect x="1900.3" y="164.2" width="13.0" height="13.0" fill="#292929" stroke="#c8511f" stroke-width="1.7" />
<rect x="1918.5" y="164.2" width="13.0" height="13.0" fill="#292929" stroke="#c8511f" stroke-width="1.7" />
<text x="1884.3" y="207.8" font-family="Liberation Sans, sans-serif" font-size="17.4" font-weight="normal" fill="#fff" textLength="63.7" lengthAdjust="spacingAndGlyphs">Add-ins</text>
<text x="1887.7" y="268.5" font-family="Liberation Sans, sans-serif" font-size="16" font-weight="normal" fill="#fff" textLength="54.6" lengthAdjust="spacingAndGlyphs">Add-ins</text>
<rect x="1989.6" y="141.8" width="40.6" height="40.4" fill="none" stroke="#b0b0b0" stroke-width="1.6" />
<rect x="1989.6" y="141.8" width="40.6" height="4.7" fill="#6a6a6a" />
<path d="M1989.6 158.5 H2030.2 M1989.6 170.5 H2030.2 M2003 170.5 V182.2 M2016.5 170.5 V182.2 M2016.5 146.5 V158.5" stroke="#b0b0b0" stroke-width="1.3" fill="none" />
<circle cx="2008.5" cy="158.5" r="11.5" fill="#292929" stroke="#e0e0e0" stroke-width="1.8"/>
<rect x="2002.3" y="157.5" width="3.3" height="6.5" fill="#9a9a9a" />
<rect x="2006.8" y="151.5" width="3.4" height="12.5" fill="#e0e0e0" />
<rect x="2011.3" y="154.5" width="3.4" height="9.5" fill="#3a96dd" />
<line x1="2016.8" y1="167.0" x2="2029.5" y2="181.5" stroke="#e0e0e0" stroke-width="2.2" stroke-linecap="round"/>
<text x="1979.1" y="207.8" font-family="Liberation Sans, sans-serif" font-size="17.4" font-weight="normal" fill="#fff" textLength="62.9" lengthAdjust="spacingAndGlyphs">Analyze</text>
<text x="1991.6" y="231.7" font-family="Liberation Sans, sans-serif" font-size="17.4" font-weight="normal" fill="#fff" textLength="37.5" lengthAdjust="spacingAndGlyphs">Data</text>
<circle cx="2212.3" cy="198.9" r="56.0" fill="#fff"/>
<rect x="2181.4" y="173.2" width="61.8" height="52.7" fill="#5b63ea" />
<rect x="2190.0" y="182.0" width="19.0" height="13.8" fill="#fff" />
<rect x="2216.2" y="182.0" width="19.0" height="13.8" fill="#fff" />
<rect x="2190.0" y="203.0" width="19.0" height="13.8" fill="#fff" />
<rect x="2216.2" y="203.0" width="19.0" height="13.8" fill="#fff" />
<text x="2294.2" y="197.9" font-family="Liberation Sans, sans-serif" font-weight="bold" font-size="50" fill="#fff" stroke="#fff" stroke-width="1.6" stroke-linejoin="round" textLength="117.4" lengthAdjust="spacingAndGlyphs">FINM</text>
<text x="2411.8" y="197.9" font-family="Liberation Sans, sans-serif" font-weight="bold" font-size="50" fill="#fff" stroke="#fff" stroke-width="1.6" stroke-linejoin="round" textLength="39.8" lengthAdjust="spacingAndGlyphs">O</text>
<text x="2451.4" y="197.9" font-family="Liberation Sans, sans-serif" font-weight="bold" font-size="50" fill="#fff" stroke="#fff" stroke-width="1.6" stroke-linejoin="round" textLength="201.8" lengthAdjust="spacingAndGlyphs">DELSLAB</text>
<ellipse cx="2431.7" cy="180" rx="13.6" ry="13.6" fill="#292929" stroke="#fff" stroke-width="8.8"/>
<rect x="2426.8" y="154.5" width="9.1" height="27.4" fill="#fff" rx="4.5" />
<text x="2295" y="236.5" font-family="Liberation Sans, sans-serif" font-size="33.2" fill="#fff" textLength="357.2" lengthAdjust="spacing">Templates</text>
<path d="M2851.2 254.3 L2857.3 261.2 L2863.5 254.3" stroke="#fff" stroke-width="2" fill="none" stroke-linecap="round" stroke-linejoin="round"/>
<rect x="47.3" y="300.8" width="2813.2" height="1369.6" fill="#fff" />
<rect x="11.0" y="277.5" width="2855.0" height="23.3" fill="#0a0a0a" />
<rect x="47.2" y="278.3" width="24.7" height="22.5" fill="#5e5e5e" />
<path d="M44.4 282.8 V297.8 H28.6 Z" stroke="none" stroke-width="0" fill="#6a6a6a" />
<text x="60.1" y="296.5" font-family="Liberation Sans, sans-serif" font-size="18.2" font-weight="normal" fill="#fff" text-anchor="middle">A</text>
<line x1="72.3" y1="279.5" x2="72.3" y2="300.8" stroke="#585858" stroke-width="1.2"/>
<text x="119.6" y="296.5" font-family="Liberation Sans, sans-serif" font-size="18.2" font-weight="normal" fill="#fff" text-anchor="middle">B</text>
<line x1="166.3" y1="279.5" x2="166.3" y2="300.8" stroke="#585858" stroke-width="1.2"/>
<text x="214.1" y="296.5" font-family="Liberation Sans, sans-serif" font-size="18.2" font-weight="normal" fill="#fff" text-anchor="middle">C</text>
<line x1="261.3" y1="279.5" x2="261.3" y2="300.8" stroke="#585858" stroke-width="1.2"/>
<text x="309.1" y="296.5" font-family="Liberation Sans, sans-serif" font-size="18.2" font-weight="normal" fill="#fff" text-anchor="middle">D</text>
<line x1="356.2" y1="279.5" x2="356.2" y2="300.8" stroke="#585858" stroke-width="1.2"/>
<text x="404.0" y="296.5" font-family="Liberation Sans, sans-serif" font-size="18.2" font-weight="normal" fill="#fff" text-anchor="middle">E</text>
<line x1="451.2" y1="279.5" x2="451.2" y2="300.8" stroke="#585858" stroke-width="1.2"/>
<text x="499.2" y="296.5" font-family="Liberation Sans, sans-serif" font-size="18.2" font-weight="normal" fill="#fff" text-anchor="middle">F</text>
<line x1="546.6" y1="279.5" x2="546.6" y2="300.8" stroke="#585858" stroke-width="1.2"/>
<text x="624.8" y="296.5" font-family="Liberation Sans, sans-serif" font-size="18.2" font-weight="normal" fill="#fff" text-anchor="middle">G</text>
<line x1="702.5" y1="279.5" x2="702.5" y2="300.8" stroke="#585858" stroke-width="1.2"/>
<text x="780.8" y="296.5" font-family="Liberation Sans, sans-serif" font-size="18.2" font-weight="normal" fill="#fff" text-anchor="middle">H</text>
<line x1="858.4" y1="279.5" x2="858.4" y2="300.8" stroke="#585858" stroke-width="1.2"/>
<text x="936.6" y="296.5" font-family="Liberation Sans, sans-serif" font-size="18.2" font-weight="normal" fill="#fff" text-anchor="middle">I</text>
<line x1="1014.2" y1="279.5" x2="1014.2" y2="300.8" stroke="#585858" stroke-width="1.2"/>
<text x="1092.6" y="296.5" font-family="Liberation Sans, sans-serif" font-size="18.2" font-weight="normal" fill="#fff" text-anchor="middle">J</text>
<line x1="1170.4" y1="279.5" x2="1170.4" y2="300.8" stroke="#585858" stroke-width="1.2"/>
<text x="1248.7" y="296.5" font-family="Liberation Sans, sans-serif" font-size="18.2" font-weight="normal" fill="#fff" text-anchor="middle">K</text>
<line x1="1326.4" y1="279.5" x2="1326.4" y2="300.8" stroke="#585858" stroke-width="1.2"/>
<text x="1404.7" y="296.5" font-family="Liberation Sans, sans-serif" font-size="18.2" font-weight="normal" fill="#fff" text-anchor="middle">L</text>
<line x1="1482.4" y1="279.5" x2="1482.4" y2="300.8" stroke="#585858" stroke-width="1.2"/>
<text x="1560.7" y="296.5" font-family="Liberation Sans, sans-serif" font-size="18.2" font-weight="normal" fill="#fff" text-anchor="middle">M</text>
<line x1="1638.4" y1="279.5" x2="1638.4" y2="300.8" stroke="#585858" stroke-width="1.2"/>
<text x="1716.7" y="296.5" font-family="Liberation Sans, sans-serif" font-size="18.2" font-weight="normal" fill="#fff" text-anchor="middle">N</text>
<line x1="1794.4" y1="279.5" x2="1794.4" y2="300.8" stroke="#585858" stroke-width="1.2"/>
<text x="1808.8" y="296.5" font-family="Liberation Sans, sans-serif" font-size="18.2" font-weight="normal" fill="#fff" text-anchor="middle">O</text>
<line x1="1822.6" y1="279.5" x2="1822.6" y2="300.8" stroke="#585858" stroke-width="1.2"/>
<text x="1868.8" y="296.5" font-family="Liberation Sans, sans-serif" font-size="18.2" font-weight="normal" fill="#fff" text-anchor="middle">P</text>
<line x1="1914.4" y1="279.5" x2="1914.4" y2="300.8" stroke="#585858" stroke-width="1.2"/>
<text x="1976.5" y="296.5" font-family="Liberation Sans, sans-serif" font-size="18.2" font-weight="normal" fill="#fff" text-anchor="middle">Q</text>
<line x1="2038.0" y1="279.5" x2="2038.0" y2="300.8" stroke="#585858" stroke-width="1.2"/>
<text x="2084.3" y="296.5" font-family="Liberation Sans, sans-serif" font-size="18.2" font-weight="normal" fill="#fff" text-anchor="middle">R</text>
<line x1="2130.0" y1="279.5" x2="2130.0" y2="300.8" stroke="#585858" stroke-width="1.2"/>
<text x="2176.3" y="296.5" font-family="Liberation Sans, sans-serif" font-size="18.2" font-weight="normal" fill="#fff" text-anchor="middle">S</text>
<line x1="2222.0" y1="279.5" x2="2222.0" y2="300.8" stroke="#585858" stroke-width="1.2"/>
<text x="2268.3" y="296.5" font-family="Liberation Sans, sans-serif" font-size="18.2" font-weight="normal" fill="#fff" text-anchor="middle">T</text>
<line x1="2314.0" y1="279.5" x2="2314.0" y2="300.8" stroke="#585858" stroke-width="1.2"/>
<text x="2360.3" y="296.5" font-family="Liberation Sans, sans-serif" font-size="18.2" font-weight="normal" fill="#fff" text-anchor="middle">U</text>
<line x1="2406.0" y1="279.5" x2="2406.0" y2="300.8" stroke="#585858" stroke-width="1.2"/>
<text x="2452.3" y="296.5" font-family="Liberation Sans, sans-serif" font-size="18.2" font-weight="normal" fill="#fff" text-anchor="middle">V</text>
<line x1="2498.0" y1="279.5" x2="2498.0" y2="300.8" stroke="#585858" stroke-width="1.2"/>
<text x="2544.3" y="296.5" font-family="Liberation Sans, sans-serif" font-size="18.2" font-weight="normal" fill="#fff" text-anchor="middle">W</text>
<line x1="2590.0" y1="279.5" x2="2590.0" y2="300.8" stroke="#585858" stroke-width="1.2"/>
<text x="2636.3" y="296.5" font-family="Liberation Sans, sans-serif" font-size="18.2" font-weight="normal" fill="#fff" text-anchor="middle">X</text>
<line x1="2682.0" y1="279.5" x2="2682.0" y2="300.8" stroke="#585858" stroke-width="1.2"/>
<text x="2728.3" y="296.5" font-family="Liberation Sans, sans-serif" font-size="18.2" font-weight="normal" fill="#fff" text-anchor="middle">Y</text>
<line x1="2774.0" y1="279.5" x2="2774.0" y2="300.8" stroke="#585858" stroke-width="1.2"/>
<text x="2820.3" y="296.5" font-family="Liberation Sans, sans-serif" font-size="18.2" font-weight="normal" fill="#fff" text-anchor="middle">Z</text>
<line x1="2866.0" y1="279.5" x2="2866.0" y2="300.8" stroke="#585858" stroke-width="1.2"/>
<clipPath id="rh"><rect x="11" y="300.8" width="36.5" height="1369.6"/></clipPath><g clip-path="url(#rh)">
<rect x="11.0" y="300.8" width="36.3" height="1369.6" fill="#0a0a0a" />
<rect x="11.0" y="301.6" width="35.5" height="38.0" fill="#5e5e5e" />
<line x1="11.0" y1="339.8" x2="47.3" y2="339.8" stroke="#585858" stroke-width="1.3"/>
<text x="29.3" y="334.2" font-family="Liberation Sans, sans-serif" font-size="18.3" font-weight="normal" fill="#fff" text-anchor="middle" textLength="9.8" lengthAdjust="spacingAndGlyphs">1</text>
<line x1="11.0" y1="374.7" x2="47.3" y2="374.7" stroke="#585858" stroke-width="1.3"/>
<text x="29.3" y="369.1" font-family="Liberation Sans, sans-serif" font-size="18.3" font-weight="normal" fill="#fff" text-anchor="middle" textLength="9.8" lengthAdjust="spacingAndGlyphs">2</text>
<line x1="11.0" y1="409.6" x2="47.3" y2="409.6" stroke="#585858" stroke-width="1.3"/>
<text x="29.3" y="404.0" font-family="Liberation Sans, sans-serif" font-size="18.3" font-weight="normal" fill="#fff" text-anchor="middle" textLength="9.8" lengthAdjust="spacingAndGlyphs">3</text>
<line x1="11.0" y1="434.5" x2="47.3" y2="434.5" stroke="#585858" stroke-width="1.3"/>
<text x="29.3" y="428.9" font-family="Liberation Sans, sans-serif" font-size="18.3" font-weight="normal" fill="#fff" text-anchor="middle" textLength="9.8" lengthAdjust="spacingAndGlyphs">4</text>
<line x1="11.0" y1="465.0" x2="47.3" y2="465.0" stroke="#585858" stroke-width="1.3"/>
<text x="29.3" y="458.2" font-family="Liberation Sans, sans-serif" font-size="18.3" font-weight="normal" fill="#fff" text-anchor="middle" textLength="9.8" lengthAdjust="spacingAndGlyphs">5</text>
<line x1="11.0" y1="472.0" x2="47.3" y2="472.0" stroke="#585858" stroke-width="1.3"/>
<clipPath id="r6"><rect x="11" y="465.8" width="36" height="6"/></clipPath><g clip-path="url(#r6)">
<text x="29.3" y="471.5" font-family="Liberation Sans, sans-serif" font-size="18.3" font-weight="normal" fill="#fff" text-anchor="middle" textLength="9.8" lengthAdjust="spacingAndGlyphs">6</text>
</g>
<line x1="11.0" y1="502.8" x2="47.3" y2="502.8" stroke="#585858" stroke-width="1.3"/>
<text x="29.3" y="497.2" font-family="Liberation Sans, sans-serif" font-size="18.3" font-weight="normal" fill="#fff" text-anchor="middle" textLength="9.8" lengthAdjust="spacingAndGlyphs">7</text>
<line x1="11.0" y1="528.4" x2="47.3" y2="528.4" stroke="#585858" stroke-width="1.3"/>
<text x="29.3" y="522.8" font-family="Liberation Sans, sans-serif" font-size="18.3" font-weight="normal" fill="#fff" text-anchor="middle" textLength="9.8" lengthAdjust="spacingAndGlyphs">8</text>
<line x1="11.0" y1="564.8" x2="47.3" y2="564.8" stroke="#585858" stroke-width="1.3"/>
<text x="29.3" y="557.8" font-family="Liberation Sans, sans-serif" font-size="18.3" font-weight="normal" fill="#fff" text-anchor="middle" textLength="9.8" lengthAdjust="spacingAndGlyphs">9</text>
<line x1="11.0" y1="601.8" x2="47.3" y2="601.8" stroke="#585858" stroke-width="1.3"/>
<text x="29.3" y="596.2" font-family="Liberation Sans, sans-serif" font-size="18.3" font-weight="normal" fill="#fff" text-anchor="middle" textLength="19.6" lengthAdjust="spacingAndGlyphs">10</text>
<line x1="11.0" y1="638.7" x2="47.3" y2="638.7" stroke="#585858" stroke-width="1.3"/>
<text x="29.3" y="633.1" font-family="Liberation Sans, sans-serif" font-size="18.3" font-weight="normal" fill="#fff" text-anchor="middle" textLength="19.6" lengthAdjust="spacingAndGlyphs">11</text>
<line x1="11.0" y1="675.7" x2="47.3" y2="675.7" stroke="#585858" stroke-width="1.3"/>
<text x="29.3" y="670.1" font-family="Liberation Sans, sans-serif" font-size="18.3" font-weight="normal" fill="#fff" text-anchor="middle" textLength="19.6" lengthAdjust="spacingAndGlyphs">12</text>
<line x1="11.0" y1="712.6" x2="47.3" y2="712.6" stroke="#585858" stroke-width="1.3"/>
<text x="29.3" y="707.0" font-family="Liberation Sans, sans-serif" font-size="18.3" font-weight="normal" fill="#fff" text-anchor="middle" textLength="19.6" lengthAdjust="spacingAndGlyphs">13</text>
<line x1="11.0" y1="749.6" x2="47.3" y2="749.6" stroke="#585858" stroke-width="1.3"/>
<text x="29.3" y="744.0" font-family="Liberation Sans, sans-serif" font-size="18.3" font-weight="normal" fill="#fff" text-anchor="middle" textLength="19.6" lengthAdjust="spacingAndGlyphs">14</text>
<line x1="11.0" y1="786.6" x2="47.3" y2="786.6" stroke="#585858" stroke-width="1.3"/>
<text x="29.3" y="781.0" font-family="Liberation Sans, sans-serif" font-size="18.3" font-weight="normal" fill="#fff" text-anchor="middle" textLength="19.6" lengthAdjust="spacingAndGlyphs">15</text>
<line x1="11.0" y1="823.5" x2="47.3" y2="823.5" stroke="#585858" stroke-width="1.3"/>
<text x="29.3" y="817.9" font-family="Liberation Sans, sans-serif" font-size="18.3" font-weight="normal" fill="#fff" text-anchor="middle" textLength="19.6" lengthAdjust="spacingAndGlyphs">16</text>
<line x1="11.0" y1="860.5" x2="47.3" y2="860.5" stroke="#585858" stroke-width="1.3"/>
<text x="29.3" y="854.9" font-family="Liberation Sans, sans-serif" font-size="18.3" font-weight="normal" fill="#fff" text-anchor="middle" textLength="19.6" lengthAdjust="spacingAndGlyphs">17</text>
<line x1="11.0" y1="897.4" x2="47.3" y2="897.4" stroke="#585858" stroke-width="1.3"/>
<text x="29.3" y="891.8" font-family="Liberation Sans, sans-serif" font-size="18.3" font-weight="normal" fill="#fff" text-anchor="middle" textLength="19.6" lengthAdjust="spacingAndGlyphs">18</text>
<line x1="11.0" y1="934.4" x2="47.3" y2="934.4" stroke="#585858" stroke-width="1.3"/>
<text x="29.3" y="928.8" font-family="Liberation Sans, sans-serif" font-size="18.3" font-weight="normal" fill="#fff" text-anchor="middle" textLength="19.6" lengthAdjust="spacingAndGlyphs">19</text>
<line x1="11.0" y1="971.4" x2="47.3" y2="971.4" stroke="#585858" stroke-width="1.3"/>
<text x="29.3" y="965.8" font-family="Liberation Sans, sans-serif" font-size="18.3" font-weight="normal" fill="#fff" text-anchor="middle" textLength="19.6" lengthAdjust="spacingAndGlyphs">20</text>
<line x1="11.0" y1="1008.3" x2="47.3" y2="1008.3" stroke="#585858" stroke-width="1.3"/>
<text x="29.3" y="1002.7" font-family="Liberation Sans, sans-serif" font-size="18.3" font-weight="normal" fill="#fff" text-anchor="middle" textLength="19.6" lengthAdjust="spacingAndGlyphs">21</text>
<line x1="11.0" y1="1045.3" x2="47.3" y2="1045.3" stroke="#585858" stroke-width="1.3"/>
<text x="29.3" y="1039.7" font-family="Liberation Sans, sans-serif" font-size="18.3" font-weight="normal" fill="#fff" text-anchor="middle" textLength="19.6" lengthAdjust="spacingAndGlyphs">22</text>
<line x1="11.0" y1="1082.2" x2="47.3" y2="1082.2" stroke="#585858" stroke-width="1.3"/>
<text x="29.3" y="1076.6" font-family="Liberation Sans, sans-serif" font-size="18.3" font-weight="normal" fill="#fff" text-anchor="middle" textLength="19.6" lengthAdjust="spacingAndGlyphs">23</text>
<line x1="11.0" y1="1119.2" x2="47.3" y2="1119.2" stroke="#585858" stroke-width="1.3"/>
<text x="29.3" y="1113.6" font-family="Liberation Sans, sans-serif" font-size="18.3" font-weight="normal" fill="#fff" text-anchor="middle" textLength="19.6" lengthAdjust="spacingAndGlyphs">24</text>
<line x1="11.0" y1="1155.4" x2="47.3" y2="1155.4" stroke="#585858" stroke-width="1.3"/>
<text x="29.3" y="1149.8" font-family="Liberation Sans, sans-serif" font-size="18.3" font-weight="normal" fill="#fff" text-anchor="middle" textLength="19.6" lengthAdjust="spacingAndGlyphs">25</text>
<line x1="11.0" y1="1158.9" x2="47.3" y2="1158.9" stroke="#585858" stroke-width="1.3"/>
<line x1="11.0" y1="1162.4" x2="47.3" y2="1162.4" stroke="#585858" stroke-width="1.3"/>
<line x1="11.0" y1="1197.0" x2="47.3" y2="1197.0" stroke="#585858" stroke-width="1.3"/>
<text x="29.3" y="1191.4" font-family="Liberation Sans, sans-serif" font-size="18.3" font-weight="normal" fill="#fff" text-anchor="middle" textLength="19.6" lengthAdjust="spacingAndGlyphs">28</text>
<line x1="11.0" y1="1201.0" x2="47.3" y2="1201.0" stroke="#585858" stroke-width="1.3"/>
<line x1="11.0" y1="1236.6" x2="47.3" y2="1236.6" stroke="#585858" stroke-width="1.3"/>
<text x="29.3" y="1231.0" font-family="Liberation Sans, sans-serif" font-size="18.3" font-weight="normal" fill="#fff" text-anchor="middle" textLength="19.6" lengthAdjust="spacingAndGlyphs">30</text>
<line x1="11.0" y1="1271.5" x2="47.3" y2="1271.5" stroke="#585858" stroke-width="1.3"/>
<text x="29.3" y="1265.9" font-family="Liberation Sans, sans-serif" font-size="18.3" font-weight="normal" fill="#fff" text-anchor="middle" textLength="19.6" lengthAdjust="spacingAndGlyphs">31</text>
<line x1="11.0" y1="1307.4" x2="47.3" y2="1307.4" stroke="#585858" stroke-width="1.3"/>
<text x="29.3" y="1301.8" font-family="Liberation Sans, sans-serif" font-size="18.3" font-weight="normal" fill="#fff" text-anchor="middle" textLength="19.6" lengthAdjust="spacingAndGlyphs">32</text>
<line x1="11.0" y1="1342.7" x2="47.3" y2="1342.7" stroke="#585858" stroke-width="1.3"/>
<text x="29.3" y="1337.1" font-family="Liberation Sans, sans-serif" font-size="18.3" font-weight="normal" fill="#fff" text-anchor="middle" textLength="19.6" lengthAdjust="spacingAndGlyphs">33</text>
<line x1="11.0" y1="1378.8" x2="47.3" y2="1378.8" stroke="#585858" stroke-width="1.3"/>
<text x="29.3" y="1373.2" font-family="Liberation Sans, sans-serif" font-size="18.3" font-weight="normal" fill="#fff" text-anchor="middle" textLength="19.6" lengthAdjust="spacingAndGlyphs">34</text>
<line x1="11.0" y1="1407.3" x2="47.3" y2="1407.3" stroke="#585858" stroke-width="1.3"/>
<text x="29.3" y="1401.7" font-family="Liberation Sans, sans-serif" font-size="18.3" font-weight="normal" fill="#fff" text-anchor="middle" textLength="19.6" lengthAdjust="spacingAndGlyphs">35</text>
<line x1="11.0" y1="1445.2" x2="47.3" y2="1445.2" stroke="#585858" stroke-width="1.3"/>
<text x="29.3" y="1439.6" font-family="Liberation Sans, sans-serif" font-size="18.3" font-weight="normal" fill="#fff" text-anchor="middle" textLength="19.6" lengthAdjust="spacingAndGlyphs">36</text>
<line x1="11.0" y1="1449.4" x2="47.3" y2="1449.4" stroke="#585858" stroke-width="1.3"/>
<line x1="11.0" y1="1485.5" x2="47.3" y2="1485.5" stroke="#585858" stroke-width="1.3"/>
<text x="29.3" y="1479.9" font-family="Liberation Sans, sans-serif" font-size="18.3" font-weight="normal" fill="#fff" text-anchor="middle" textLength="19.6" lengthAdjust="spacingAndGlyphs">38</text>
<line x1="11.0" y1="1489.5" x2="47.3" y2="1489.5" stroke="#585858" stroke-width="1.3"/>
<line x1="11.0" y1="1525.3" x2="47.3" y2="1525.3" stroke="#585858" stroke-width="1.3"/>
<text x="29.3" y="1519.7" font-family="Liberation Sans, sans-serif" font-size="18.3" font-weight="normal" fill="#fff" text-anchor="middle" textLength="19.6" lengthAdjust="spacingAndGlyphs">40</text>
<line x1="11.0" y1="1560.6" x2="47.3" y2="1560.6" stroke="#585858" stroke-width="1.3"/>
<text x="29.3" y="1555.0" font-family="Liberation Sans, sans-serif" font-size="18.3" font-weight="normal" fill="#fff" text-anchor="middle" textLength="19.6" lengthAdjust="spacingAndGlyphs">41</text>
<line x1="11.0" y1="1596.3" x2="47.3" y2="1596.3" stroke="#585858" stroke-width="1.3"/>
<text x="29.3" y="1590.7" font-family="Liberation Sans, sans-serif" font-size="18.3" font-weight="normal" fill="#fff" text-anchor="middle" textLength="19.6" lengthAdjust="spacingAndGlyphs">42</text>
<line x1="11.0" y1="1625.5" x2="47.3" y2="1625.5" stroke="#585858" stroke-width="1.3"/>
<text x="29.3" y="1619.9" font-family="Liberation Sans, sans-serif" font-size="18.3" font-weight="normal" fill="#fff" text-anchor="middle" textLength="19.6" lengthAdjust="spacingAndGlyphs">43</text>
<line x1="11.0" y1="1650.7" x2="47.3" y2="1650.7" stroke="#585858" stroke-width="1.3"/>
<text x="29.3" y="1645.1" font-family="Liberation Sans, sans-serif" font-size="18.3" font-weight="normal" fill="#fff" text-anchor="middle" textLength="19.6" lengthAdjust="spacingAndGlyphs">44</text>
<line x1="11.0" y1="1676.0" x2="47.3" y2="1676.0" stroke="#585858" stroke-width="1.3"/>
<text x="29.3" y="1670.4" font-family="Liberation Sans, sans-serif" font-size="18.3" font-weight="normal" fill="#fff" text-anchor="middle" textLength="19.6" lengthAdjust="spacingAndGlyphs">45</text>
</g>
<line x1="47.3" y1="300.8" x2="47.3" y2="1670.4" stroke="#1c1c1c" stroke-width="1"/>
<line x1="47.8" y1="301.2" x2="47.8" y2="339.8" stroke="#1e7145" stroke-width="1.6"/>
<line x1="47.3" y1="301.5" x2="72.3" y2="301.5" stroke="#1e7145" stroke-width="1.4"/>
<line x1="47.3" y1="434.6" x2="2860.5" y2="434.6" stroke="#9a9a9a" stroke-width="1.2"/>
<text x="77.4" y="333.8" font-family="DejaVu Sans Condensed, DejaVu Sans, sans-serif" font-size="33.53" font-weight="bold" fill="#222" textLength="478.8" lengthAdjust="spacingAndGlyphs">Returns on Invested Capital</text>
<text x="76.6" y="367.4" font-family="DejaVu Sans Condensed, DejaVu Sans, sans-serif" font-size="27.74" font-weight="bold" fill="#000" textLength="270.0" lengthAdjust="spacingAndGlyphs">ABC Company Inc.</text>
<text x="74.9" y="397.8" font-family="DejaVu Sans Condensed, DejaVu Sans, sans-serif" font-size="19.04" font-weight="bold" fill="#1f74e8" textLength="227.5" lengthAdjust="spacingAndGlyphs">Go to Table of Contents</text>
<line x1="75.5" y1="401.3" x2="301.9" y2="401.3" stroke="#1f74e8" stroke-width="1.6"/>
<rect x="71.3" y="435.2" width="475.6" height="29.5" fill="#4b4fd1" />
<rect x="71.9" y="472.3" width="475.0" height="30.5" fill="#4bb3e8" />
<text x="207.5" y="457.8" font-family="DejaVu Sans Condensed, DejaVu Sans, sans-serif" font-size="23.18" font-weight="bold" fill="#fff" textLength="204.2" lengthAdjust="spacingAndGlyphs">Years to payback</text>
<text x="289.8" y="495.5" font-family="DejaVu Sans Condensed, DejaVu Sans, sans-serif" font-size="22.56" font-weight="bold" fill="#fff" textLength="37.7" lengthAdjust="spacingAndGlyphs">0.1</text>
<rect x="702.0" y="435.2" width="468.6" height="29.5" fill="#4b4fd1" />
<rect x="702.6" y="472.3" width="468.0" height="30.5" fill="#4bb3e8" />
<text x="748.2" y="457.8" font-family="DejaVu Sans Condensed, DejaVu Sans, sans-serif" font-size="23.18" font-weight="bold" fill="#fff" textLength="370.0" lengthAdjust="spacingAndGlyphs">5-Year Cash Generated ($'000)</text>
<text x="890.6" y="495.5" font-family="DejaVu Sans Condensed, DejaVu Sans, sans-serif" font-size="22.56" font-weight="bold" fill="#fff" textLength="82.3" lengthAdjust="spacingAndGlyphs">13,957</text>
<rect x="1326.3" y="435.2" width="468.2" height="29.5" fill="#4b4fd1" />
<rect x="1326.9" y="472.3" width="467.6" height="30.5" fill="#4bb3e8" />
<text x="1486.3" y="457.8" font-family="DejaVu Sans Condensed, DejaVu Sans, sans-serif" font-size="23.18" font-weight="bold" fill="#fff" textLength="148.4" lengthAdjust="spacingAndGlyphs">ROIC - 2030</text>
<text x="1520.0" y="495.5" font-family="DejaVu Sans Condensed, DejaVu Sans, sans-serif" font-size="22.56" font-weight="bold" fill="#fff" textLength="82.2" lengthAdjust="spacingAndGlyphs">48.6%</text>
<rect x="71.3" y="528.4" width="1723.2" height="36.2" fill="#4b4fd1" />
<text x="623.0" y="555.9" font-family="DejaVu Sans Condensed, DejaVu Sans, sans-serif" font-size="27.12" font-weight="bold" fill="#fff" textLength="613.0" lengthAdjust="spacingAndGlyphs">Returns on Invested Capital Chart ($'000)</text>
<text x="186.4" y="1024.6" font-family="DejaVu Sans Condensed, DejaVu Sans, sans-serif" font-size="19.46" font-weight="bold" fill="#000" text-anchor="end" textLength="7.2" lengthAdjust="spacingAndGlyphs">-</text>
<line x1="210.2" y1="973.5" x2="1794.4" y2="973.5" stroke="#6ea6c2" stroke-width="1.2"/>
<text x="187.0" y="979.9" font-family="DejaVu Sans Condensed, DejaVu Sans, sans-serif" font-size="19.46" font-weight="bold" fill="#000" text-anchor="end" textLength="53.8" lengthAdjust="spacingAndGlyphs">2,000</text>
<line x1="210.2" y1="929.5" x2="1794.4" y2="929.5" stroke="#6ea6c2" stroke-width="1.2"/>
<text x="187.0" y="935.9" font-family="DejaVu Sans Condensed, DejaVu Sans, sans-serif" font-size="19.46" font-weight="bold" fill="#000" text-anchor="end" textLength="53.8" lengthAdjust="spacingAndGlyphs">4,000</text>
<line x1="210.2" y1="885.5" x2="1794.4" y2="885.5" stroke="#6ea6c2" stroke-width="1.2"/>
<text x="187.0" y="891.9" font-family="DejaVu Sans Condensed, DejaVu Sans, sans-serif" font-size="19.46" font-weight="bold" fill="#000" text-anchor="end" textLength="53.8" lengthAdjust="spacingAndGlyphs">6,000</text>
<line x1="210.2" y1="841.5" x2="1794.4" y2="841.5" stroke="#6ea6c2" stroke-width="1.2"/>
<text x="187.0" y="847.9" font-family="DejaVu Sans Condensed, DejaVu Sans, sans-serif" font-size="19.46" font-weight="bold" fill="#000" text-anchor="end" textLength="53.8" lengthAdjust="spacingAndGlyphs">8,000</text>
<line x1="210.2" y1="797.5" x2="1794.4" y2="797.5" stroke="#6ea6c2" stroke-width="1.2"/>
<text x="187.0" y="803.9" font-family="DejaVu Sans Condensed, DejaVu Sans, sans-serif" font-size="19.46" font-weight="bold" fill="#000" text-anchor="end" textLength="65.8" lengthAdjust="spacingAndGlyphs">10,000</text>
<line x1="210.2" y1="753.5" x2="1794.4" y2="753.5" stroke="#6ea6c2" stroke-width="1.2"/>
<text x="187.0" y="759.9" font-family="DejaVu Sans Condensed, DejaVu Sans, sans-serif" font-size="19.46" font-weight="bold" fill="#000" text-anchor="end" textLength="65.8" lengthAdjust="spacingAndGlyphs">12,000</text>
<line x1="210.2" y1="709.5" x2="1794.4" y2="709.5" stroke="#6ea6c2" stroke-width="1.2"/>
<text x="187.0" y="715.9" font-family="DejaVu Sans Condensed, DejaVu Sans, sans-serif" font-size="19.46" font-weight="bold" fill="#000" text-anchor="end" textLength="65.8" lengthAdjust="spacingAndGlyphs">14,000</text>
<line x1="210.2" y1="665.5" x2="1794.4" y2="665.5" stroke="#6ea6c2" stroke-width="1.2"/>
<text x="187.0" y="671.9" font-family="DejaVu Sans Condensed, DejaVu Sans, sans-serif" font-size="19.46" font-weight="bold" fill="#000" text-anchor="end" textLength="65.8" lengthAdjust="spacingAndGlyphs">16,000</text>
<rect x="275.9" y="597.4" width="46.0" height="12.0" fill="#4bb3e8" />
<text x="326.8" y="609.9" font-family="DejaVu Sans Condensed, DejaVu Sans, sans-serif" font-size="23.49" font-weight="bold" fill="#000" textLength="265.6" lengthAdjust="spacingAndGlyphs">Total Invested Capital</text>
<rect x="771.3" y="597.6" width="46.7" height="11.8" fill="#f07c70" />
<text x="823.0" y="609.9" font-family="DejaVu Sans Condensed, DejaVu Sans, sans-serif" font-size="23.49" font-weight="bold" fill="#000" textLength="474.6" lengthAdjust="spacingAndGlyphs">Net Operating Profit After Tax (NOPAT)</text>
<line x1="1474.3" y1="602.8" x2="1523.0" y2="602.8" stroke="#2db5a5" stroke-width="3.6"/>
<circle cx="1499.4" cy="602.8" r="7.0" fill="#2db5a5"/>
<text x="1527.1" y="609.9" font-family="DejaVu Sans Condensed, DejaVu Sans, sans-serif" font-size="23.49" font-weight="bold" fill="#000" textLength="64.3" lengthAdjust="spacingAndGlyphs">ROIC</text>
<rect x="246.8" y="981.4" width="121.8" height="36.1" fill="#4bb3e8" />
<rect x="368.6" y="1002.8" width="121.8" height="14.7" fill="#f07c70" />
<rect x="563.6" y="953.4" width="121.8" height="64.1" fill="#4bb3e8" />
<rect x="685.4" y="988.2" width="121.8" height="29.3" fill="#f07c70" />
<rect x="880.4" y="901.1" width="121.8" height="116.4" fill="#4bb3e8" />
<rect x="1002.2" y="963.9" width="121.8" height="53.6" fill="#f07c70" />
<rect x="1197.2" y="818.9" width="121.8" height="198.6" fill="#4bb3e8" />
<rect x="1319.0" y="934.1" width="121.8" height="83.4" fill="#f07c70" />
<rect x="1514.0" y="693.0" width="121.8" height="324.5" fill="#4bb3e8" />
<rect x="1635.8" y="890.3" width="121.8" height="127.2" fill="#f07c70" />
<line x1="210.2" y1="1018.0" x2="1794.4" y2="1018.0" stroke="#4f9fcd" stroke-width="1.8"/>
<line x1="211.0" y1="1017.5" x2="211.0" y2="1024.7" stroke="#4f9fcd" stroke-width="1.8"/>
<line x1="527.8" y1="1017.5" x2="527.8" y2="1024.7" stroke="#4f9fcd" stroke-width="1.8"/>
<line x1="844.6" y1="1017.5" x2="844.6" y2="1024.7" stroke="#4f9fcd" stroke-width="1.8"/>
<line x1="1161.4" y1="1017.5" x2="1161.4" y2="1024.7" stroke="#4f9fcd" stroke-width="1.8"/>
<line x1="1478.2" y1="1017.5" x2="1478.2" y2="1024.7" stroke="#4f9fcd" stroke-width="1.8"/>
<line x1="1795.0" y1="1017.5" x2="1795.0" y2="1024.7" stroke="#4f9fcd" stroke-width="1.8"/>
<polyline points="367.8,811.7 684.7,722.3 1001.5,718.3 1318.3,750.7 1635,772.5" fill="none" stroke="#2db5a5" stroke-width="4.8" stroke-linejoin="round"/>
<circle cx="367.8" cy="811.7" r="39.4" fill="#2db5a5"/>
<text x="368.6" y="820.3" font-family="DejaVu Sans Condensed, DejaVu Sans, sans-serif" font-size="19.66" font-weight="bold" fill="#fff" text-anchor="middle" textLength="66.5" lengthAdjust="spacingAndGlyphs">40.9%</text>
<circle cx="684.7" cy="722.3" r="39.4" fill="#2db5a5"/>
<text x="685.5" y="730.9" font-family="DejaVu Sans Condensed, DejaVu Sans, sans-serif" font-size="19.66" font-weight="bold" fill="#fff" text-anchor="middle" textLength="66.5" lengthAdjust="spacingAndGlyphs">58.6%</text>
<circle cx="1001.5" cy="718.3" r="39.4" fill="#2db5a5"/>
<text x="1002.3" y="726.9" font-family="DejaVu Sans Condensed, DejaVu Sans, sans-serif" font-size="19.66" font-weight="bold" fill="#fff" text-anchor="middle" textLength="66.5" lengthAdjust="spacingAndGlyphs">59.4%</text>
<circle cx="1318.3" cy="750.7" r="39.4" fill="#2db5a5"/>
<text x="1319.1" y="759.3" font-family="DejaVu Sans Condensed, DejaVu Sans, sans-serif" font-size="19.66" font-weight="bold" fill="#fff" text-anchor="middle" textLength="66.5" lengthAdjust="spacingAndGlyphs">53.0%</text>
<circle cx="1635.0" cy="772.5" r="39.4" fill="#2db5a5"/>
<text x="1635.8" y="781.1" font-family="DejaVu Sans Condensed, DejaVu Sans, sans-serif" font-size="19.66" font-weight="bold" fill="#fff" text-anchor="middle" textLength="66.5" lengthAdjust="spacingAndGlyphs">48.6%</text>
<text x="369.2" y="1090.3" font-family="DejaVu Sans Condensed, DejaVu Sans, sans-serif" font-size="23.18" font-weight="bold" fill="#000" text-anchor="middle" textLength="56.0" lengthAdjust="spacingAndGlyphs">2026</text>
<text x="686.0" y="1090.3" font-family="DejaVu Sans Condensed, DejaVu Sans, sans-serif" font-size="23.18" font-weight="bold" fill="#000" text-anchor="middle" textLength="56.0" lengthAdjust="spacingAndGlyphs">2027</text>
<text x="1002.8" y="1090.3" font-family="DejaVu Sans Condensed, DejaVu Sans, sans-serif" font-size="23.18" font-weight="bold" fill="#000" text-anchor="middle" textLength="56.0" lengthAdjust="spacingAndGlyphs">2028</text>
<text x="1319.6" y="1090.3" font-family="DejaVu Sans Condensed, DejaVu Sans, sans-serif" font-size="23.18" font-weight="bold" fill="#000" text-anchor="middle" textLength="56.0" lengthAdjust="spacingAndGlyphs">2029</text>
<text x="1636.4" y="1090.3" font-family="DejaVu Sans Condensed, DejaVu Sans, sans-serif" font-size="23.18" font-weight="bold" fill="#000" text-anchor="middle" textLength="56.0" lengthAdjust="spacingAndGlyphs">2030</text>
<rect x="71.3" y="1119.3" width="1723.5" height="36.1" fill="#4b4fd1" />
<text x="666.0" y="1148.3" font-family="DejaVu Sans Condensed, DejaVu Sans, sans-serif" font-size="27.12" font-weight="bold" fill="#fff" textLength="524.8" lengthAdjust="spacingAndGlyphs">Returns on Invested Capital ($'000)</text>
<rect x="72.0" y="1160.9" width="1722.6" height="34.7" fill="#6e75e8" />
<line x1="1014.2" y1="1160.9" x2="1014.2" y2="1195.6" stroke="#fff" stroke-width="1.6"/>
<line x1="1170.4" y1="1160.9" x2="1170.4" y2="1195.6" stroke="#fff" stroke-width="1.6"/>
<line x1="1326.4" y1="1160.9" x2="1326.4" y2="1195.6" stroke="#fff" stroke-width="1.6"/>
<line x1="1482.4" y1="1160.9" x2="1482.4" y2="1195.6" stroke="#fff" stroke-width="1.6"/>
<line x1="1638.4" y1="1160.9" x2="1638.4" y2="1195.6" stroke="#fff" stroke-width="1.6"/>
<text x="84.2" y="1185.2" font-family="DejaVu Sans Condensed, DejaVu Sans, sans-serif" font-size="18.84" font-weight="bold" fill="#fff" textLength="103.0" lengthAdjust="spacingAndGlyphs">Fiscal Year</text>
<text x="1093.5" y="1185.2" font-family="DejaVu Sans Condensed, DejaVu Sans, sans-serif" font-size="19.04" font-weight="bold" fill="#fff" text-anchor="middle" textLength="46.9" lengthAdjust="spacingAndGlyphs">2026</text>
<text x="1249.6" y="1185.2" font-family="DejaVu Sans Condensed, DejaVu Sans, sans-serif" font-size="19.04" font-weight="bold" fill="#fff" text-anchor="middle" textLength="46.9" lengthAdjust="spacingAndGlyphs">2027</text>
<text x="1405.6" y="1185.2" font-family="DejaVu Sans Condensed, DejaVu Sans, sans-serif" font-size="19.04" font-weight="bold" fill="#fff" text-anchor="middle" textLength="46.9" lengthAdjust="spacingAndGlyphs">2028</text>
<text x="1561.6" y="1185.2" font-family="DejaVu Sans Condensed, DejaVu Sans, sans-serif" font-size="19.04" font-weight="bold" fill="#fff" text-anchor="middle" textLength="46.9" lengthAdjust="spacingAndGlyphs">2029</text>
<text x="1717.6" y="1185.2" font-family="DejaVu Sans Condensed, DejaVu Sans, sans-serif" font-size="19.04" font-weight="bold" fill="#fff" text-anchor="middle" textLength="46.9" lengthAdjust="spacingAndGlyphs">2030</text>
<text x="93.2" y="1225.6" font-family="DejaVu Sans Condensed, DejaVu Sans, sans-serif" font-size="18.73" font-weight="normal" fill="#111" textLength="47.9" lengthAdjust="spacingAndGlyphs">Debts</text>
<text x="1160.4" y="1225.6" font-family="DejaVu Sans Condensed, DejaVu Sans, sans-serif" font-size="18.84" font-weight="normal" fill="#111" text-anchor="end" textLength="29.8" lengthAdjust="spacingAndGlyphs">283</text>
<text x="1316.4" y="1225.6" font-family="DejaVu Sans Condensed, DejaVu Sans, sans-serif" font-size="18.84" font-weight="normal" fill="#111" text-anchor="end" textLength="29.8" lengthAdjust="spacingAndGlyphs">237</text>
<text x="1472.4" y="1225.6" font-family="DejaVu Sans Condensed, DejaVu Sans, sans-serif" font-size="18.84" font-weight="normal" fill="#111" text-anchor="end" textLength="29.8" lengthAdjust="spacingAndGlyphs">190</text>
<text x="1628.4" y="1225.6" font-family="DejaVu Sans Condensed, DejaVu Sans, sans-serif" font-size="18.84" font-weight="normal" fill="#111" text-anchor="end" textLength="29.8" lengthAdjust="spacingAndGlyphs">141</text>
<text x="1784.4" y="1225.6" font-family="DejaVu Sans Condensed, DejaVu Sans, sans-serif" font-size="18.84" font-weight="normal" fill="#111" text-anchor="end" textLength="19.9" lengthAdjust="spacingAndGlyphs">90</text>
<text x="93.2" y="1260.6" font-family="DejaVu Sans Condensed, DejaVu Sans, sans-serif" font-size="18.73" font-weight="normal" fill="#111" textLength="51.8" lengthAdjust="spacingAndGlyphs">Equity</text>
<text x="1160.4" y="1260.6" font-family="DejaVu Sans Condensed, DejaVu Sans, sans-serif" font-size="18.84" font-weight="normal" fill="#111" text-anchor="end" textLength="45.3" lengthAdjust="spacingAndGlyphs">1,356</text>
<text x="1316.4" y="1260.6" font-family="DejaVu Sans Condensed, DejaVu Sans, sans-serif" font-size="18.84" font-weight="normal" fill="#111" text-anchor="end" textLength="45.3" lengthAdjust="spacingAndGlyphs">2,677</text>
<text x="1472.4" y="1260.6" font-family="DejaVu Sans Condensed, DejaVu Sans, sans-serif" font-size="18.84" font-weight="normal" fill="#111" text-anchor="end" textLength="45.3" lengthAdjust="spacingAndGlyphs">5,102</text>
<text x="1628.4" y="1260.6" font-family="DejaVu Sans Condensed, DejaVu Sans, sans-serif" font-size="18.84" font-weight="normal" fill="#111" text-anchor="end" textLength="45.3" lengthAdjust="spacingAndGlyphs">8,886</text>
<text x="1784.4" y="1260.6" font-family="DejaVu Sans Condensed, DejaVu Sans, sans-serif" font-size="18.84" font-weight="normal" fill="#111" text-anchor="end" textLength="55.2" lengthAdjust="spacingAndGlyphs">14,660</text>
<rect x="71.3" y="1271.3" width="1723.5" height="36.1" fill="#4bb3e8" />
<text x="75.8" y="1297.6" font-family="DejaVu Sans Condensed, DejaVu Sans, sans-serif" font-size="21.63" font-weight="bold" fill="#fff" textLength="244.2" lengthAdjust="spacingAndGlyphs">Total Invested Capital</text>
<text x="1159.0" y="1297.6" font-family="DejaVu Sans Condensed, DejaVu Sans, sans-serif" font-size="19.77" font-weight="bold" fill="#fff" text-anchor="end" textLength="54.6" lengthAdjust="spacingAndGlyphs">1,640</text>
<text x="1315.0" y="1297.6" font-family="DejaVu Sans Condensed, DejaVu Sans, sans-serif" font-size="19.77" font-weight="bold" fill="#fff" text-anchor="end" textLength="54.6" lengthAdjust="spacingAndGlyphs">2,914</text>
<text x="1471.0" y="1297.6" font-family="DejaVu Sans Condensed, DejaVu Sans, sans-serif" font-size="19.77" font-weight="bold" fill="#fff" text-anchor="end" textLength="54.6" lengthAdjust="spacingAndGlyphs">5,292</text>
<text x="1627.0" y="1297.6" font-family="DejaVu Sans Condensed, DejaVu Sans, sans-serif" font-size="19.77" font-weight="bold" fill="#fff" text-anchor="end" textLength="54.6" lengthAdjust="spacingAndGlyphs">9,027</text>
<text x="1783.0" y="1297.6" font-family="DejaVu Sans Condensed, DejaVu Sans, sans-serif" font-size="19.77" font-weight="bold" fill="#fff" text-anchor="end" textLength="66.8" lengthAdjust="spacingAndGlyphs">14,750</text>
<text x="93.2" y="1331.8" font-family="DejaVu Sans Condensed, DejaVu Sans, sans-serif" font-size="18.73" font-weight="normal" fill="#111" textLength="327.5" lengthAdjust="spacingAndGlyphs">Net Operating Profit After Tax (NOPAT)</text>
<text x="1160.4" y="1331.8" font-family="DejaVu Sans Condensed, DejaVu Sans, sans-serif" font-size="18.84" font-weight="normal" fill="#111" text-anchor="end" textLength="29.8" lengthAdjust="spacingAndGlyphs">670</text>
<text x="1316.4" y="1331.8" font-family="DejaVu Sans Condensed, DejaVu Sans, sans-serif" font-size="18.84" font-weight="normal" fill="#111" text-anchor="end" textLength="45.3" lengthAdjust="spacingAndGlyphs">1,333</text>
<text x="1472.4" y="1331.8" font-family="DejaVu Sans Condensed, DejaVu Sans, sans-serif" font-size="18.84" font-weight="normal" fill="#111" text-anchor="end" textLength="45.3" lengthAdjust="spacingAndGlyphs">2,436</text>
<text x="1628.4" y="1331.8" font-family="DejaVu Sans Condensed, DejaVu Sans, sans-serif" font-size="18.84" font-weight="normal" fill="#111" text-anchor="end" textLength="45.3" lengthAdjust="spacingAndGlyphs">3,791</text>
<text x="1784.4" y="1331.8" font-family="DejaVu Sans Condensed, DejaVu Sans, sans-serif" font-size="18.84" font-weight="normal" fill="#111" text-anchor="end" textLength="45.3" lengthAdjust="spacingAndGlyphs">5,780</text>
<rect x="71.3" y="1342.3" width="1723.5" height="36.4" fill="#4bb3e8" />
<text x="77.1" y="1368.4" font-family="DejaVu Sans Condensed, DejaVu Sans, sans-serif" font-size="21.63" font-weight="bold" fill="#fff" textLength="58.8" lengthAdjust="spacingAndGlyphs">ROIC</text>
<text x="1167.0" y="1368.4" font-family="DejaVu Sans Condensed, DejaVu Sans, sans-serif" font-size="19.66" font-weight="bold" fill="#fff" text-anchor="end" textLength="65.1" lengthAdjust="spacingAndGlyphs">40.9%</text>
<text x="1323.0" y="1368.4" font-family="DejaVu Sans Condensed, DejaVu Sans, sans-serif" font-size="19.66" font-weight="bold" fill="#fff" text-anchor="end" textLength="65.1" lengthAdjust="spacingAndGlyphs">58.6%</text>
<text x="1479.0" y="1368.4" font-family="DejaVu Sans Condensed, DejaVu Sans, sans-serif" font-size="19.66" font-weight="bold" fill="#fff" text-anchor="end" textLength="65.1" lengthAdjust="spacingAndGlyphs">59.4%</text>
<text x="1635.0" y="1368.4" font-family="DejaVu Sans Condensed, DejaVu Sans, sans-serif" font-size="19.66" font-weight="bold" fill="#fff" text-anchor="end" textLength="65.1" lengthAdjust="spacingAndGlyphs">53.0%</text>
<text x="1791.0" y="1368.4" font-family="DejaVu Sans Condensed, DejaVu Sans, sans-serif" font-size="19.66" font-weight="bold" fill="#fff" text-anchor="end" textLength="65.1" lengthAdjust="spacingAndGlyphs">48.6%</text>
<rect x="71.3" y="1407.6" width="1723.5" height="37.4" fill="#4b4fd1" />
<text x="694.7" y="1437.0" font-family="DejaVu Sans Condensed, DejaVu Sans, sans-serif" font-size="27.12" font-weight="bold" fill="#fff" textLength="469.1" lengthAdjust="spacingAndGlyphs">Payback Period Analysis ($'000)</text>
<rect x="72.0" y="1449.8" width="1722.6" height="35.0" fill="#6e75e8" />
<line x1="1014.2" y1="1449.8" x2="1014.2" y2="1484.8" stroke="#fff" stroke-width="1.6"/>
<line x1="1170.4" y1="1449.8" x2="1170.4" y2="1484.8" stroke="#fff" stroke-width="1.6"/>
<line x1="1326.4" y1="1449.8" x2="1326.4" y2="1484.8" stroke="#fff" stroke-width="1.6"/>
<line x1="1482.4" y1="1449.8" x2="1482.4" y2="1484.8" stroke="#fff" stroke-width="1.6"/>
<line x1="1638.4" y1="1449.8" x2="1638.4" y2="1484.8" stroke="#fff" stroke-width="1.6"/>
<text x="84.2" y="1474.2" font-family="DejaVu Sans Condensed, DejaVu Sans, sans-serif" font-size="18.84" font-weight="bold" fill="#fff" textLength="103.0" lengthAdjust="spacingAndGlyphs">Fiscal Year</text>
<text x="1093.5" y="1474.2" font-family="DejaVu Sans Condensed, DejaVu Sans, sans-serif" font-size="19.04" font-weight="bold" fill="#fff" text-anchor="middle" textLength="46.9" lengthAdjust="spacingAndGlyphs">2026</text>
<text x="1249.6" y="1474.2" font-family="DejaVu Sans Condensed, DejaVu Sans, sans-serif" font-size="19.04" font-weight="bold" fill="#fff" text-anchor="middle" textLength="46.9" lengthAdjust="spacingAndGlyphs">2027</text>
<text x="1405.6" y="1474.2" font-family="DejaVu Sans Condensed, DejaVu Sans, sans-serif" font-size="19.04" font-weight="bold" fill="#fff" text-anchor="middle" textLength="46.9" lengthAdjust="spacingAndGlyphs">2028</text>
<text x="1561.6" y="1474.2" font-family="DejaVu Sans Condensed, DejaVu Sans, sans-serif" font-size="19.04" font-weight="bold" fill="#fff" text-anchor="middle" textLength="46.9" lengthAdjust="spacingAndGlyphs">2029</text>
<text x="1717.6" y="1474.2" font-family="DejaVu Sans Condensed, DejaVu Sans, sans-serif" font-size="19.04" font-weight="bold" fill="#fff" text-anchor="middle" textLength="46.9" lengthAdjust="spacingAndGlyphs">2030</text>
<text x="93.2" y="1514.2" font-family="DejaVu Sans Condensed, DejaVu Sans, sans-serif" font-size="18.73" font-weight="normal" fill="#111" textLength="159.7" lengthAdjust="spacingAndGlyphs">Net Profit After Tax</text>
<text x="1160.4" y="1514.2" font-family="DejaVu Sans Condensed, DejaVu Sans, sans-serif" font-size="18.84" font-weight="normal" fill="#111" text-anchor="end" textLength="29.8" lengthAdjust="spacingAndGlyphs">670</text>
<text x="1316.4" y="1514.2" font-family="DejaVu Sans Condensed, DejaVu Sans, sans-serif" font-size="18.84" font-weight="normal" fill="#111" text-anchor="end" textLength="45.3" lengthAdjust="spacingAndGlyphs">1,333</text>
<text x="1472.4" y="1514.2" font-family="DejaVu Sans Condensed, DejaVu Sans, sans-serif" font-size="18.84" font-weight="normal" fill="#111" text-anchor="end" textLength="45.3" lengthAdjust="spacingAndGlyphs">2,436</text>
<text x="1628.4" y="1514.2" font-family="DejaVu Sans Condensed, DejaVu Sans, sans-serif" font-size="18.84" font-weight="normal" fill="#111" text-anchor="end" textLength="45.3" lengthAdjust="spacingAndGlyphs">3,791</text>
<text x="1784.4" y="1514.2" font-family="DejaVu Sans Condensed, DejaVu Sans, sans-serif" font-size="18.84" font-weight="normal" fill="#111" text-anchor="end" textLength="45.3" lengthAdjust="spacingAndGlyphs">5,780</text>
<text x="93.2" y="1549.6" font-family="DejaVu Sans Condensed, DejaVu Sans, sans-serif" font-size="18.73" font-weight="normal" fill="#111" textLength="53.8" lengthAdjust="spacingAndGlyphs">CAPEX</text>
<text x="1167.7" y="1549.6" font-family="DejaVu Sans Condensed, DejaVu Sans, sans-serif" font-size="18.84" font-weight="normal" fill="#111" text-anchor="end" textLength="33.8" lengthAdjust="spacingAndGlyphs">(54)</text>
<text x="1316.4" y="1549.6" font-family="DejaVu Sans Condensed, DejaVu Sans, sans-serif" font-size="18.84" font-weight="normal" fill="#111" text-anchor="end" textLength="6.6" lengthAdjust="spacingAndGlyphs">-</text>
<text x="1472.4" y="1549.6" font-family="DejaVu Sans Condensed, DejaVu Sans, sans-serif" font-size="18.84" font-weight="normal" fill="#111" text-anchor="end" textLength="6.6" lengthAdjust="spacingAndGlyphs">-</text>
<text x="1628.4" y="1549.6" font-family="DejaVu Sans Condensed, DejaVu Sans, sans-serif" font-size="18.84" font-weight="normal" fill="#111" text-anchor="end" textLength="6.6" lengthAdjust="spacingAndGlyphs">-</text>
<text x="1784.4" y="1549.6" font-family="DejaVu Sans Condensed, DejaVu Sans, sans-serif" font-size="18.84" font-weight="normal" fill="#111" text-anchor="end" textLength="6.6" lengthAdjust="spacingAndGlyphs">-</text>
<rect x="71.3" y="1559.8" width="1723.5" height="36.2" fill="#4bb3e8" />
<text x="75.8" y="1586.4" font-family="DejaVu Sans Condensed, DejaVu Sans, sans-serif" font-size="21.63" font-weight="bold" fill="#fff" textLength="396.5" lengthAdjust="spacingAndGlyphs">Cumulative Cash Generated (Spent)</text>
<text x="1159.0" y="1586.4" font-family="DejaVu Sans Condensed, DejaVu Sans, sans-serif" font-size="19.77" font-weight="bold" fill="#fff" text-anchor="end" textLength="36.5" lengthAdjust="spacingAndGlyphs">616</text>
<text x="1315.0" y="1586.4" font-family="DejaVu Sans Condensed, DejaVu Sans, sans-serif" font-size="19.77" font-weight="bold" fill="#fff" text-anchor="end" textLength="54.6" lengthAdjust="spacingAndGlyphs">1,949</text>
<text x="1471.0" y="1586.4" font-family="DejaVu Sans Condensed, DejaVu Sans, sans-serif" font-size="19.77" font-weight="bold" fill="#fff" text-anchor="end" textLength="54.6" lengthAdjust="spacingAndGlyphs">4,386</text>
<text x="1627.0" y="1586.4" font-family="DejaVu Sans Condensed, DejaVu Sans, sans-serif" font-size="19.77" font-weight="bold" fill="#fff" text-anchor="end" textLength="54.6" lengthAdjust="spacingAndGlyphs">8,177</text>
<text x="1783.0" y="1586.4" font-family="DejaVu Sans Condensed, DejaVu Sans, sans-serif" font-size="19.77" font-weight="bold" fill="#fff" text-anchor="end" textLength="66.8" lengthAdjust="spacingAndGlyphs">13,957</text>
<text x="74.9" y="1617.6" font-family="DejaVu Sans Condensed, DejaVu Sans, sans-serif" font-size="19.25" font-weight="bold" fill="#222" textLength="125.4" lengthAdjust="spacingAndGlyphs">Payback year</text>
<rect x="1014.0" y="1597.0" width="156.7" height="28.6" fill="#2db5a5" />
<text x="1093.0" y="1617.6" font-family="DejaVu Sans Condensed, DejaVu Sans, sans-serif" font-size="19.25" font-weight="bold" fill="#222" text-anchor="middle" textLength="11.8" lengthAdjust="spacingAndGlyphs">1</text>
<text x="1249.4" y="1617.6" font-family="DejaVu Sans Condensed, DejaVu Sans, sans-serif" font-size="19.25" font-weight="bold" fill="#111" text-anchor="middle" textLength="8.0" lengthAdjust="spacingAndGlyphs">-</text>
<text x="1405.4" y="1617.6" font-family="DejaVu Sans Condensed, DejaVu Sans, sans-serif" font-size="19.25" font-weight="bold" fill="#111" text-anchor="middle" textLength="8.0" lengthAdjust="spacingAndGlyphs">-</text>
<text x="1561.4" y="1617.6" font-family="DejaVu Sans Condensed, DejaVu Sans, sans-serif" font-size="19.25" font-weight="bold" fill="#111" text-anchor="middle" textLength="8.0" lengthAdjust="spacingAndGlyphs">-</text>
<text x="1717.4" y="1617.6" font-family="DejaVu Sans Condensed, DejaVu Sans, sans-serif" font-size="19.25" font-weight="bold" fill="#111" text-anchor="middle" textLength="8.0" lengthAdjust="spacingAndGlyphs">-</text>
<rect x="2860.5" y="277.5" width="30.5" height="1392.9" fill="#0a0a0a" />
<rect x="2862.0" y="279.0" width="27.0" height="1390.0" fill="#171717" rx="13" />
<path d="M2870 294.8 L2876 286 L2882 294.8 Z" stroke="none" stroke-width="0" fill="#9a9a9a" />
<rect x="2870.0" y="304.0" width="12.0" height="1334.2" fill="#9a9a9a" rx="6" />
<path d="M2870 1654.5 L2876 1663.5 L2882 1654.5 Z" stroke="none" stroke-width="0" fill="#9a9a9a" />
<rect x="11.0" y="1670.4" width="2880.0" height="48.0" fill="#0a0a0a" />
<line x1="11.0" y1="1718.4" x2="2891.0" y2="1718.4" stroke="#2c2c2c" stroke-width="1.2"/>
<path d="M55.3 1686 L46.8 1693.2 L55.3 1700.4" stroke="#8a8a8a" stroke-width="1.8" fill="none" stroke-linecap="round" stroke-linejoin="round"/>
<path d="M95.5 1686 L104 1693.2 L95.5 1700.4" stroke="#d8d8d8" stroke-width="1.8" fill="none" stroke-linecap="round" stroke-linejoin="round"/>
<text x="189.5" y="1702.8" font-family="Liberation Sans, sans-serif" font-size="21" font-weight="normal" fill="#fff" textLength="84.2" lengthAdjust="spacingAndGlyphs">Contents</text>
<line x1="1775.5" y1="1680.0" x2="1775.5" y2="1707.7" stroke="#6a6a6a" stroke-width="1.1"/>
<line x1="292.7" y1="1680.0" x2="292.7" y2="1707.7" stroke="#6a6a6a" stroke-width="1.1"/>
<line x1="433.4" y1="1680.0" x2="433.4" y2="1707.7" stroke="#6a6a6a" stroke-width="1.1"/>
<line x1="552.2" y1="1680.0" x2="552.2" y2="1707.7" stroke="#6a6a6a" stroke-width="1.1"/>
<line x1="723.6" y1="1680.0" x2="723.6" y2="1707.7" stroke="#6a6a6a" stroke-width="1.1"/>
<line x1="825.0" y1="1680.0" x2="825.0" y2="1707.7" stroke="#6a6a6a" stroke-width="1.1"/>
<line x1="925.3" y1="1680.0" x2="925.3" y2="1707.7" stroke="#6a6a6a" stroke-width="1.1"/>
<line x1="1051.4" y1="1680.0" x2="1051.4" y2="1707.7" stroke="#6a6a6a" stroke-width="1.1"/>
<line x1="1154.5" y1="1680.0" x2="1154.5" y2="1707.7" stroke="#6a6a6a" stroke-width="1.1"/>
<line x1="1209.3" y1="1680.0" x2="1209.3" y2="1707.7" stroke="#6a6a6a" stroke-width="1.1"/>
<line x1="1270.5" y1="1680.0" x2="1270.5" y2="1707.7" stroke="#6a6a6a" stroke-width="1.1"/>
<line x1="1331.4" y1="1680.0" x2="1331.4" y2="1707.7" stroke="#6a6a6a" stroke-width="1.1"/>
<line x1="1459.3" y1="1680.0" x2="1459.3" y2="1707.7" stroke="#6a6a6a" stroke-width="1.1"/>
<line x1="1587.0" y1="1680.0" x2="1587.0" y2="1707.7" stroke="#6a6a6a" stroke-width="1.1"/>
<line x1="1714.1" y1="1680.0" x2="1714.1" y2="1707.7" stroke="#6a6a6a" stroke-width="1.1"/>
<line x1="1861.0" y1="1680.0" x2="1861.0" y2="1707.7" stroke="#6a6a6a" stroke-width="1.1"/>
<line x1="1958.2" y1="1680.0" x2="1958.2" y2="1707.7" stroke="#6a6a6a" stroke-width="1.1"/>
<line x1="2035.4" y1="1680.0" x2="2035.4" y2="1707.7" stroke="#6a6a6a" stroke-width="1.1"/>
<rect x="299.0" y="1676.5" width="127.8" height="35.3" fill="#fff06b" rx="7" />
<text x="313.1" y="1702.8" font-family="Liberation Sans, sans-serif" font-size="21" font-weight="normal" fill="#0a0a0a" textLength="101.4" lengthAdjust="spacingAndGlyphs">Dashboard</text>
<rect x="440.2" y="1676.5" width="105.7" height="35.3" fill="#fff06b" rx="7" />
<text x="453.8" y="1702.8" font-family="Liberation Sans, sans-serif" font-size="21" font-weight="normal" fill="#0a0a0a" textLength="80.0" lengthAdjust="spacingAndGlyphs">Revenue</text>
<rect x="559.3" y="1676.5" width="157.4" height="35.3" fill="#fff06b" rx="7" />
<text x="571.2" y="1702.8" font-family="Liberation Sans, sans-serif" font-size="21" font-weight="normal" fill="#0a0a0a" textLength="134.9" lengthAdjust="spacingAndGlyphs">COGS &amp; OPEX</text>
<rect x="730.1" y="1676.5" width="88.5" height="35.3" fill="#fff06b" rx="7" />
<text x="742.5" y="1702.8" font-family="Liberation Sans, sans-serif" font-size="21" font-weight="normal" fill="#0a0a0a" textLength="63.4" lengthAdjust="spacingAndGlyphs">Payroll</text>
<rect x="832.0" y="1676.5" width="86.6" height="35.3" fill="#fff06b" rx="7" />
<text x="844.0" y="1702.8" font-family="Liberation Sans, sans-serif" font-size="21" font-weight="normal" fill="#0a0a0a" textLength="62.9" lengthAdjust="spacingAndGlyphs">CAPEX</text>
<rect x="931.7" y="1676.5" width="113.2" height="35.3" fill="#fff06b" rx="7" />
<text x="944.5" y="1702.8" font-family="Liberation Sans, sans-serif" font-size="21" font-weight="normal" fill="#0a0a0a" textLength="87.3" lengthAdjust="spacingAndGlyphs">CapTable</text>
<rect x="1057.9" y="1676.5" width="90.1" height="35.3" fill="#fff06b" rx="7" />
<text x="1070.2" y="1702.8" font-family="Liberation Sans, sans-serif" font-size="21" font-weight="normal" fill="#0a0a0a" textLength="65.4" lengthAdjust="spacingAndGlyphs">Capital</text>
<rect x="1161.0" y="1676.5" width="41.8" height="35.3" fill="#4bb3e8" rx="7" />
<text x="1173.8" y="1702.8" font-family="Liberation Sans, sans-serif" font-size="21" font-weight="normal" fill="#0a0a0a" textLength="17.1" lengthAdjust="spacingAndGlyphs">IS</text>
<rect x="1215.7" y="1676.5" width="48.3" height="35.3" fill="#4bb3e8" rx="7" />
<text x="1227.7" y="1702.8" font-family="Liberation Sans, sans-serif" font-size="21" font-weight="normal" fill="#0a0a0a" textLength="24.9" lengthAdjust="spacingAndGlyphs">CF</text>
<rect x="1277.0" y="1676.5" width="47.9" height="35.3" fill="#4bb3e8" rx="7" />
<text x="1289.4" y="1702.8" font-family="Liberation Sans, sans-serif" font-size="21" font-weight="normal" fill="#0a0a0a" textLength="23.6" lengthAdjust="spacingAndGlyphs">BS</text>
<rect x="1338.3" y="1676.5" width="114.5" height="35.3" fill="#4bb3e8" rx="7" />
<text x="1350.2" y="1702.8" font-family="Liberation Sans, sans-serif" font-size="21" font-weight="normal" fill="#0a0a0a" textLength="89.4" lengthAdjust="spacingAndGlyphs">Scenarios</text>
<rect x="1466.2" y="1676.5" width="114.4" height="35.3" fill="#4bb3e8" rx="7" />
<text x="1478.5" y="1702.8" font-family="Liberation Sans, sans-serif" font-size="21" font-weight="normal" fill="#0a0a0a" textLength="89.0" lengthAdjust="spacingAndGlyphs">Valuation</text>
<rect x="1594.0" y="1676.5" width="113.6" height="35.3" fill="#4bb3e8" rx="7" />
<text x="1607.2" y="1702.8" font-family="Liberation Sans, sans-serif" font-size="21" font-weight="normal" fill="#0a0a0a" textLength="88.5" lengthAdjust="spacingAndGlyphs">Summary</text>
<rect x="1721.0" y="1676.5" width="47.5" height="35.3" fill="#4bb3e8" rx="7" />
<text x="1733.8" y="1702.8" font-family="Liberation Sans, sans-serif" font-size="21" font-weight="normal" fill="#0a0a0a" textLength="22.8" lengthAdjust="spacingAndGlyphs">BE</text>
<rect x="1868.0" y="1676.5" width="83.6" height="35.3" fill="#4bb3e8" rx="7" />
<text x="1879.0" y="1702.8" font-family="Liberation Sans, sans-serif" font-size="21" font-weight="normal" fill="#0a0a0a" textLength="60.7" lengthAdjust="spacingAndGlyphs">Charts</text>
<rect x="1965.0" y="1676.5" width="64.0" height="35.3" fill="#4bb3e8" rx="7" />
<text x="1977.5" y="1702.8" font-family="Liberation Sans, sans-serif" font-size="21" font-weight="normal" fill="#0a0a0a" textLength="39.6" lengthAdjust="spacingAndGlyphs">KPIs</text>
<clipPath id="sc"><rect x="2042" y="1670" width="30" height="48"/></clipPath><g clip-path="url(#sc)">
<rect x="2042.0" y="1676.5" width="98.0" height="35.3" fill="#4bb3e8" rx="7" />
<text x="2054" y="1702.8" font-family="Liberation Sans, sans-serif" font-size="21" fill="#0a0a0a">Scenarios</text>
</g>
<defs><radialGradient id="rg" cx="0.5" cy="0.25" r="0.8"><stop offset="0.4" stop-color="#fff"/><stop offset="1" stop-color="#b9dbf1"/></radialGradient></defs>
<path d="M1776 1669.6 H1860.2 a6 6 0 0 0 -6 6 V1704.7 a7 7 0 0 1 -7 7 H1789 a7 7 0 0 1 -7 -7 V1676.3 a6 6 0 0 0 -6 -6 Z" stroke="none" stroke-width="0" fill="url(#rg)" />
<text x="1793.9" y="1697.8" font-family="Liberation Sans, sans-serif" font-size="21" font-weight="normal" fill="#0a0a0a" textLength="48.8" lengthAdjust="spacingAndGlyphs">ROIC</text>
<rect x="1793.8" y="1705.2" width="48.2" height="2.9" fill="#1e8f4e" rx="1" />
<circle cx="2089.2" cy="1693.0" r="2.0" fill="#e8e8e8"/>
<circle cx="2095.2" cy="1693.0" r="2.0" fill="#e8e8e8"/>
<circle cx="2101.2" cy="1693.0" r="2.0" fill="#e8e8e8"/>
<path d="M2135 1693 H2152 M2143.5 1684.5 V1701.5" stroke="#f0f0f0" stroke-width="1.8" fill="none" />
<rect x="2190.3" y="1685.1" width="2.8" height="2.8" fill="#f0f0f0" />
<rect x="2190.3" y="1692.1" width="2.8" height="2.8" fill="#f0f0f0" />
<rect x="2190.3" y="1699.1" width="2.8" height="2.8" fill="#f0f0f0" />
<rect x="2216.4" y="1680.0" width="643.3" height="26.0" fill="#171717" rx="13" />
<path d="M2234.3 1686.5 L2224 1693 L2234.3 1699.5 Z" stroke="none" stroke-width="0" fill="#9a9a9a" />
<rect x="2241.6" y="1687.0" width="553.1" height="12.2" fill="#9a9a9a" rx="6" />
<path d="M2842 1686.5 L2852.4 1693 L2842 1699.5 Z" stroke="none" stroke-width="0" fill="#9a9a9a" />
<rect x="11.0" y="1719.0" width="2880.0" height="31.8" fill="#141414" />
<text x="26.5" y="1741.0" font-family="Liberation Sans, sans-serif" font-size="15.8" font-weight="normal" fill="#fff" textLength="43.7" lengthAdjust="spacingAndGlyphs">Ready</text>
<rect x="100.2" y="1727.3" width="19.8" height="16.9" fill="none" rx="1.5" stroke="#e8e8e8" stroke-width="1.6" />
<line x1="100.2" y1="1731.2" x2="120.0" y2="1731.2" stroke="#e8e8e8" stroke-width="1.4"/>
<line x1="103.5" y1="1735.4" x2="108.0" y2="1735.4" stroke="#e8e8e8" stroke-width="1.4"/>
<line x1="103.5" y1="1739.4" x2="107.0" y2="1739.4" stroke="#e8e8e8" stroke-width="1.4"/>
<circle cx="114.6" cy="1739.6" r="5.6" fill="#141414" stroke="#e8e8e8" stroke-width="1.6"/>
<circle cx="114.6" cy="1739.6" r="2.3" fill="#e8e8e8"/>
<path d="M148.3 1730.3 C152 1732.6 159 1732.6 163.8 1729.6 M155.6 1732 V1738.2 M155.4 1737.5 L150.6 1745 M155.8 1737.5 L158.2 1741" stroke="#ececec" stroke-width="4.6" fill="none" stroke-linecap="round" stroke-linejoin="round"/>
<path d="M148.3 1730.3 C152 1732.6 159 1732.6 163.8 1729.6 M155.6 1732 V1738.2 M155.4 1737.5 L150.6 1745 M155.8 1737.5 L158.2 1741" stroke="#141414" stroke-width="1.7" fill="none" stroke-linecap="round" stroke-linejoin="round"/>
<circle cx="155.6" cy="1727.0" r="2.7" fill="#141414" stroke="#ececec" stroke-width="1.5"/>
<path d="M159.6 1737.6 L167.6 1745.6 M167.6 1737.6 L159.6 1745.6" stroke="#141414" stroke-width="3.6" fill="none" stroke-linecap="round"/>
<path d="M159.6 1737.6 L167.6 1745.6 M167.6 1737.6 L159.6 1745.6" stroke="#ececec" stroke-width="1.5" fill="none" stroke-linecap="round"/>
<text x="172.6" y="1741.0" font-family="Liberation Sans, sans-serif" font-size="15.8" font-weight="bold" fill="#fff" textLength="189.0" lengthAdjust="spacingAndGlyphs">Accessibility: Investigate</text>
<rect x="2445.0" y="1719.0" width="60.0" height="31.8" fill="#2b2b2b" />
<rect x="2465.3" y="1725.7" width="18.3" height="16.7" fill="none" stroke="#f0f0f0" stroke-width="1.7" />
<path d="M2471.4 1725.7 V1742.4 M2477.5 1725.7 V1742.4 M2465.3 1731.3 H2483.6 M2465.3 1736.8 H2483.6" stroke="#f0f0f0" stroke-width="1.5" fill="none" />
<rect x="2525.0" y="1725.7" width="19.6" height="16.7" fill="none" stroke="#f0f0f0" stroke-width="1.7" />
<rect x="2529.6" y="1729.8" width="10.4" height="8.8" fill="none" stroke="#f0f0f0" stroke-width="1.5" />
<line x1="2532.0" y1="1732.6" x2="2537.6" y2="1732.6" stroke="#f0f0f0" stroke-width="1.3"/>
<line x1="2532.0" y1="1735.6" x2="2537.6" y2="1735.6" stroke="#f0f0f0" stroke-width="1.3"/>
<rect x="2584.8" y="1725.7" width="20.0" height="16.7" fill="none" stroke="#f0f0f0" stroke-width="1.7" />
<path d="M2590.5 1725.7 V1735 H2598.5 V1725.7" stroke="#f0f0f0" stroke-width="1.6" fill="none" />
<line x1="2633.2" y1="1734.6" x2="2644.2" y2="1734.6" stroke="#d0d0d0" stroke-width="1.5"/>
<line x1="2653.2" y1="1734.6" x2="2800.8" y2="1734.6" stroke="#8a8a8a" stroke-width="1.5"/>
<rect x="2727.6" y="1726.5" width="8.1" height="16.3" fill="#c8c8c8" rx="1.5" />
<path d="M2808.9 1734.6 H2819.9 M2814.4 1729.1 V1740.1" stroke="#d0d0d0" stroke-width="1.5" fill="none" />
<text x="2839.4" y="1741.1" font-family="Liberation Sans, sans-serif" font-size="15.8" font-weight="normal" fill="#fff" textLength="40.3" lengthAdjust="spacingAndGlyphs">120%</text>
</svg>
</div>
</body></html>
